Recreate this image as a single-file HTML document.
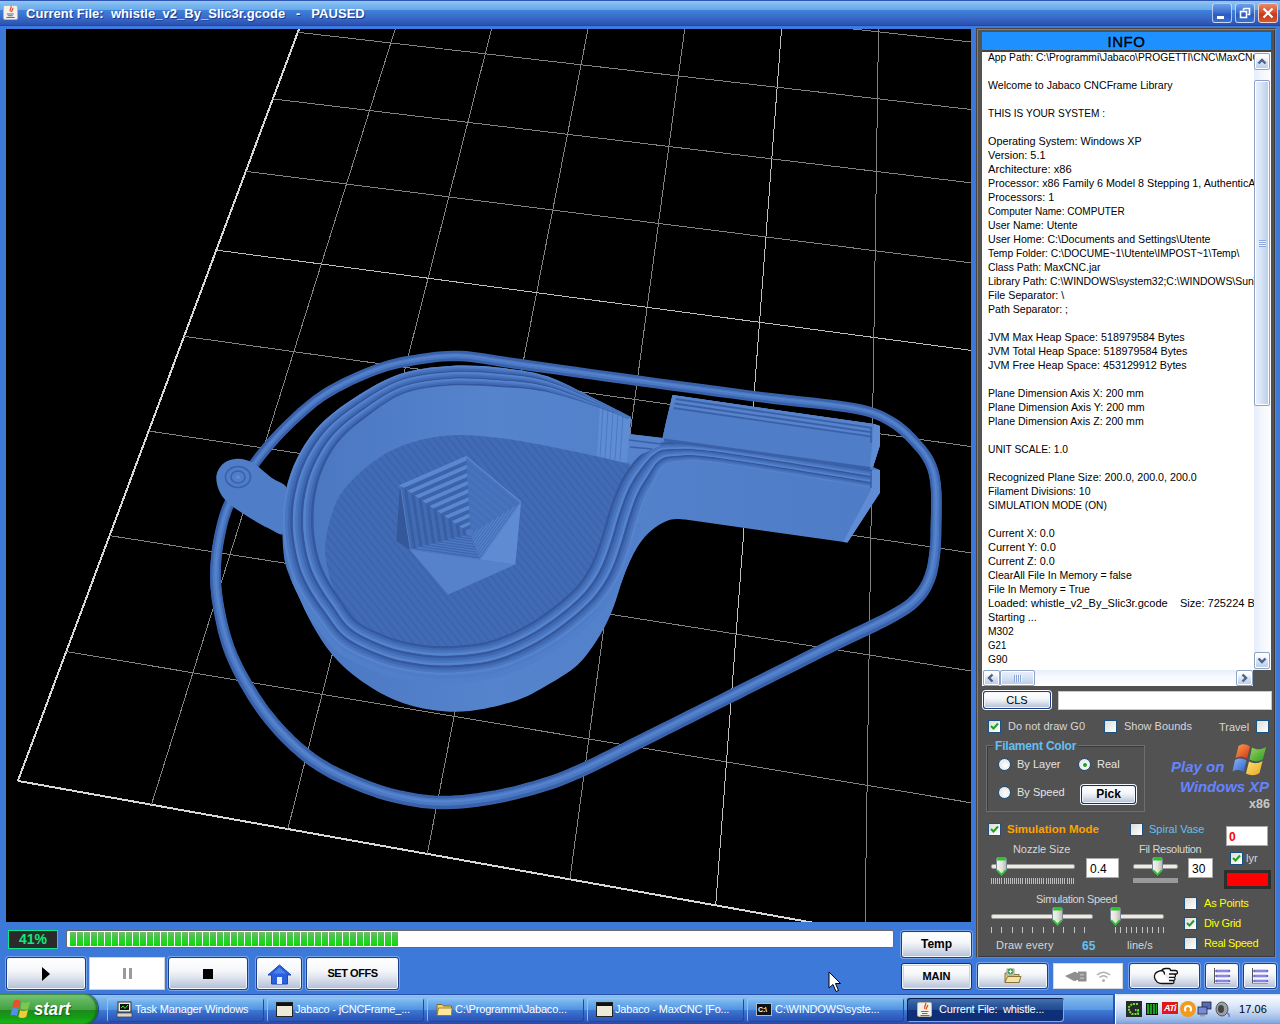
<!DOCTYPE html>
<html><head><meta charset="utf-8"><title>MaxCNC</title>
<style>
*{box-sizing:border-box;margin:0;padding:0}
html,body{width:1280px;height:1024px;overflow:hidden;background:#3d79d8;font-family:"Liberation Sans",sans-serif;font-size:11px;color:#000}
.abs{position:absolute}
#title{left:0;top:0;width:1280px;height:29px;background:linear-gradient(#2f55b5 0,#2f55b5 1px,#92c8f1 1px,#7ab6ee 5px,#68a9ec 10px,#3d82d8 10.5px,#3a70ce 16px,#315bba 22px,#2b50b0 25px,#27459c 25px,#27459c 26px,#3d7ae0 26px,#3d7ae0 29px)}
#title .t{left:26px;top:6px;font-weight:bold;font-size:13px;color:#fff;text-shadow:1px 1px 0 #1a3a90;white-space:pre;letter-spacing:0.03px}
.wb{top:3px;width:20px;height:20px;border:1px solid rgba(255,255,255,.62);border-radius:3px;background:linear-gradient(#6d9fe6,#3f72d2 45%,#2c5ac0 60%,#3a70d0)}
#view{left:6px;top:29px;width:965px;height:893px;background:#000;overflow:hidden}
#panel{left:976px;top:28px;width:300px;height:930px;background:#525252;border:1px solid;border-color:#4a443c #8a8278 #8a8278 #4a443c;box-shadow:inset 1px 1px 0 #808080,inset -1px -1px 0 #3a3a3a}
#info{left:982px;top:32px;width:289px;height:18px;background:#1e90ff;text-align:center;font-size:15px;line-height:20px;color:#000;letter-spacing:0.6px;-webkit-text-stroke:0.35px #000}
#ta{left:982px;top:52px;width:272px;height:618px;background:#fff;overflow:hidden}
.ln{height:14px;line-height:14px;font-size:11px;white-space:pre;color:#000}.ln span{display:inline-block;transform-origin:0 0}
.btn{border:1px solid #1c3f8c;border-radius:3px;background:linear-gradient(#ffffff 0,#f5f7fa 40%,#e2e7f0 60%,#c0cbde 88%,#aebbd3 100%);box-shadow:inset 0 0 0 1px #f4f6fa,0 0 0 1px rgba(170,200,245,.55);text-align:center;font-size:11px;color:#000}
.btn.b{font-weight:bold}
.sbb{width:16px;height:17px;border:1px solid #8ea2c6;border-radius:2px;background:linear-gradient(#fff 0,#f6f9fe 25%,#d0def3 60%,#b9cce8 100%);box-shadow:inset 0 0 0 1px #fff}
.sbb svg{position:absolute;left:-1px;top:-1px}
.sbt{border:1px solid #8ea2c6;border-radius:2px;background:linear-gradient(90deg,#eaf1fd,#d6e3f6 45%,#b9cce8);box-shadow:inset 0 0 0 1px #fff}
.sbt.h{background:linear-gradient(#eaf1fd,#d6e3f6 45%,#b9cce8)}
.tf{background:#fff;border:1px solid #7f9db9}
.lab{color:#d6d6d6;font-size:11px;white-space:pre;line-height:13px}
.cb{width:13px;height:13px;border:1px solid #1c5180;background:linear-gradient(135deg,#dcdcd7,#fff)}
.cb svg{position:absolute;left:1px;top:1px}
.rb{width:13px;height:13px;border:1px solid #1c5180;border-radius:50%;background:radial-gradient(circle at 60% 60%,#fff,#dcdcd7)}
.rb.on::after{content:"";position:absolute;left:3.5px;top:3.5px;width:4px;height:4px;border-radius:50%;background:#21a121}
.track{height:5px;background:#ecebe4;border:1px solid #9d9c99;border-radius:2px}
.thumb{width:11px;height:19px}
.tick{width:1px;background:#c8c8c8}
#taskbar{left:0;top:994px;width:1280px;height:30px;background:linear-gradient(#2a50b0 0,#2a50b0 1px,#8ec6f1 1px,#76b2ec 6px,#5a98e2 16px,#3d7ad4 16.5px,#3566c4 22px,#2c52b2 28px,#2a4aa8 30px)}
.tb{top:998px;height:24px;width:157px;border-radius:3px;background:linear-gradient(#8ac2f3 0,#6eaceb 5px,#5092e1 12px,#3b77d3 12.5px,#3262c2 18px,#2a51b2 24px);box-shadow:inset 1px 1px 0 rgba(150,195,245,.9),inset -1px -1px 0 #2446a0;color:#fff;font-size:11px;line-height:23px;white-space:pre;overflow:hidden;letter-spacing:-0.17px}
.tb span{position:absolute;left:28px;top:0}
.tb.act{background:linear-gradient(#4d74b2 0,#2f5b9d 6px,#1f4a90 12px,#0f3078 12.5px,#0e2e76 24px);box-shadow:inset 1px 1px 0 #0a1e50,inset -1px -1px 0 #8fa6d6}
</style></head><body>
<!-- title bar -->
<div id="title" class="abs">
 <div class="abs" style="left:3px;top:5px;width:15px;height:15px;background:#f4f0e8;border:1px solid #b9b6a8;border-radius:2px">
  <svg class="abs" style="left:0;top:-1px" width="13" height="15" viewBox="0 0 14 16"><path d="M7.5 1 C9 3 5 4.5 7 7 M9.5 3 C10.5 4.5 7.5 5.5 8.5 7.5" stroke="#e0491c" stroke-width="1.3" fill="none"/><path d="M3 9.5 H10.5 M4 11.5 H9.5 M2.5 13.5 H11.5" stroke="#5a6f9c" stroke-width="1.1" fill="none"/></svg>
 </div>
 <div class="abs t">Current File:  whistle_v2_By_Slic3r.gcode   -   PAUSED</div>
 <div class="abs wb" style="left:1212px"><div class="abs" style="left:4px;top:12px;width:7px;height:3px;background:#fff"></div></div>
 <div class="abs wb" style="left:1235px"><svg class="abs" style="left:0;top:0" width="18" height="18"><path d="M7.5 4.5 H13.5 V10.5 H11.5 M7.5 4.5 V6.5" stroke="#fff" stroke-width="1.6" fill="none"/><rect x="4.5" y="7.5" width="6" height="6" stroke="#fff" stroke-width="1.6" fill="none"/></svg></div>
 <div class="abs wb" style="left:1258px;border-color:#f0d0c8;background:linear-gradient(#e8896c,#d9502c 45%,#c23a16 60%,#d8562e)"><svg class="abs" style="left:0;top:0" width="18" height="18"><path d="M4.5 4.5 L13.5 13.5 M13.5 4.5 L4.5 13.5" stroke="#fff" stroke-width="2.2" fill="none"/></svg></div>
</div>

<!-- 3D view -->
<div id="view" class="abs">
<svg class="abs" style="left:0;top:0" width="965" height="893" viewBox="0 0 965 893">
<g shape-rendering="crispEdges"><line x1="11.9" y1="751.9" x2="336.1" y2="-115.3" stroke="#d8d8d8" stroke-width="2"/><line x1="11.9" y1="751.9" x2="1491.6" y2="1015.8" stroke="#d8d8d8" stroke-width="2"/><line x1="145.4" y1="775.7" x2="422.6" y2="-106.2" stroke="#828282" stroke-width="1"/><line x1="60.3" y1="622.6" x2="1455.4" y2="855.7" stroke="#828282" stroke-width="1"/><line x1="281.8" y1="800.1" x2="510.3" y2="-97.0" stroke="#828282" stroke-width="1"/><line x1="103.6" y1="506.6" x2="1423.4" y2="714.0" stroke="#828282" stroke-width="1"/><line x1="421.3" y1="824.9" x2="599.1" y2="-87.7" stroke="#828282" stroke-width="1"/><line x1="142.7" y1="402.0" x2="1394.9" y2="587.6" stroke="#828282" stroke-width="1"/><line x1="563.9" y1="850.3" x2="689.3" y2="-78.3" stroke="#828282" stroke-width="1"/><line x1="178.1" y1="307.3" x2="1369.2" y2="474.2" stroke="#828282" stroke-width="1"/><line x1="709.7" y1="876.4" x2="780.7" y2="-68.7" stroke="#bebebe" stroke-width="1"/><line x1="210.4" y1="221.1" x2="1346.1" y2="372.0" stroke="#bebebe" stroke-width="1"/><line x1="858.9" y1="903.0" x2="873.4" y2="-59.0" stroke="#828282" stroke-width="1"/><line x1="239.8" y1="142.3" x2="1325.2" y2="279.3" stroke="#828282" stroke-width="1"/><line x1="1011.5" y1="930.2" x2="967.4" y2="-49.1" stroke="#828282" stroke-width="1"/><line x1="266.9" y1="69.9" x2="1306.1" y2="194.8" stroke="#828282" stroke-width="1"/><line x1="1167.8" y1="958.0" x2="1062.8" y2="-39.1" stroke="#828282" stroke-width="1"/><line x1="291.8" y1="3.3" x2="1288.6" y2="117.6" stroke="#828282" stroke-width="1"/><line x1="1327.8" y1="986.6" x2="1159.6" y2="-29.0" stroke="#828282" stroke-width="1"/><line x1="314.8" y1="-58.3" x2="1272.6" y2="46.7" stroke="#828282" stroke-width="1"/><line x1="1491.6" y1="1015.8" x2="1257.8" y2="-18.7" stroke="#d8d8d8" stroke-width="2"/><line x1="336.1" y1="-115.3" x2="1257.8" y2="-18.7" stroke="#d8d8d8" stroke-width="2"/></g>
<defs><pattern id="hatch" width="6" height="6" patternUnits="userSpaceOnUse" patternTransform="rotate(-39)"><rect width="6" height="6" fill="#416bb5"/><rect width="2" height="6" fill="#3c65ae"/></pattern>
<linearGradient id="wallg" x1="0" y1="0" x2="1" y2="0"><stop offset="0" stop-color="#4a76c0"/><stop offset="0.35" stop-color="#5583cc"/><stop offset="1" stop-color="#4f7cc6"/></linearGradient>
</defs>
<g transform="translate(-6,-29)">
<path d="M459.8 360.1L465.5 360.4L470.8 360.9L476.1 361.6L481.7 362.5L488.0 363.5L495.4 364.7L504.0 366.1L514.4 367.6L526.7 369.3L540.9 371.3L556.4 373.5L572.9 375.8L589.9 378.2L607.0 380.6L623.7 382.9L639.6 385.1L655.0 387.2L670.6 389.4L686.1 391.5L701.6 393.5L716.8 395.6L731.6 397.5L746.0 399.4L759.8 401.2L773.4 402.8L786.8 404.4L800.0 405.8L812.7 407.1L824.7 408.4L835.8 409.8L845.9 411.2L854.7 412.7L862.0 414.2L868.0 415.7L872.8 417.2L876.8 418.7L880.3 420.3L883.6 422.0L886.9 423.9L890.5 426.1L894.1 428.3L897.4 430.8L900.6 433.5L903.7 436.3L906.6 439.2L909.3 442.1L912.0 445.0L914.4 447.7L916.7 450.3L918.7 452.6L920.5 454.9L922.1 457.2L923.5 459.4L924.8 461.7L926.1 464.1L927.2 466.6L928.2 469.2L929.0 471.7L929.7 474.2L930.3 476.9L930.8 479.7L931.2 482.7L931.6 486.0L931.9 489.6L932.1 493.6L932.2 498.1L932.3 503.0L932.2 508.0L932.1 513.1L932.0 518.0L931.9 522.6L931.8 526.8L931.7 530.5L931.7 533.8L931.7 536.8L931.6 539.7L931.5 542.5L931.3 545.2L931.1 548.0L930.8 551.0L930.4 554.2L930.0 557.4L929.5 560.7L929.0 564.0L928.4 567.2L927.7 570.4L926.8 573.4L925.9 576.3L924.8 579.0L923.7 581.7L922.4 584.3L921.1 586.8L919.6 589.2L918.0 591.5L916.1 593.8L914.0 596.2L911.8 598.4L909.7 600.4L907.5 602.3L905.1 604.2L902.2 606.1L898.9 608.3L894.8 610.7L889.8 613.5L884.0 616.6L877.3 620.0L869.9 623.6L861.9 627.4L853.6 631.3L844.9 635.4L836.2 639.6L827.5 643.8L818.7 648.2L809.4 652.8L799.9 657.6L790.2 662.4L780.5 667.3L770.9 672.1L761.6 676.7L752.6 681.2L744.0 685.5L735.6 689.7L727.3 693.8L719.2 697.9L711.2 701.9L703.3 705.8L695.5 709.7L687.7 713.6L679.9 717.5L672.1 721.4L664.4 725.2L656.8 729.1L649.3 732.8L641.9 736.5L634.7 740.0L627.8 743.5L621.0 746.9L614.3 750.2L607.8 753.5L601.5 756.6L595.4 759.7L589.4 762.6L583.6 765.3L578.0 767.8L572.7 770.1L567.6 772.3L562.9 774.2L558.3 776.0L553.6 777.7L548.9 779.3L543.9 780.9L538.6 782.6L532.9 784.3L526.9 785.9L520.8 787.6L514.5 789.2L508.1 790.7L501.8 792.0L495.5 793.3L489.2 794.4L483.0 795.4L476.8 796.3L470.5 797.1L464.3 797.8L458.1 798.3L452.0 798.7L446.0 798.8L440.2 798.8L434.5 798.6L428.8 798.2L423.3 797.5L417.7 796.8L412.3 795.8L406.9 794.8L401.5 793.7L396.3 792.5L391.1 791.2L386.0 789.8L381.0 788.2L376.1 786.6L371.2 784.8L366.4 783.0L361.6 781.1L357.0 779.2L352.4 777.3L347.9 775.3L343.4 773.3L339.1 771.2L334.8 769.1L330.7 766.9L326.6 764.5L322.7 762.1L318.8 759.6L315.1 757.1L311.5 754.5L308.0 751.7L304.6 748.9L301.2 746.0L297.7 742.9L294.3 739.7L290.9 736.3L287.4 732.8L284.0 729.2L280.6 725.5L277.2 721.6L274.0 717.7L270.8 713.8L267.7 709.8L264.7 705.7L261.8 701.4L258.9 697.1L256.1 692.7L253.4 688.3L250.8 683.9L248.3 679.5L246.0 675.3L243.8 671.2L241.7 667.2L239.8 663.3L238.0 659.4L236.3 655.6L234.7 651.6L233.1 647.6L231.7 643.4L230.3 639.0L228.9 634.4L227.7 629.7L226.5 625.0L225.4 620.2L224.4 615.5L223.5 610.9L222.7 606.4L222.0 602.2L221.4 598.1L220.9 594.2L220.5 590.3L220.1 586.4L219.9 582.6L219.7 578.6L219.7 574.6L219.8 570.4L219.9 566.2L220.2 561.9L220.5 557.7L221.0 553.3L221.6 549.0L222.3 544.6L223.1 540.2L224.0 535.7L224.9 531.3L225.9 526.8L227.1 522.3L228.4 517.8L229.9 513.3L231.7 508.7L233.7 504.0L236.1 499.3L238.9 494.3L241.9 489.3L245.1 484.2L248.6 479.1L252.1 474.0L255.7 469.0L259.3 464.2L262.9 459.4L266.6 454.7L270.4 450.1L274.3 445.5L278.3 441.0L282.4 436.6L286.6 432.3L290.9 428.0L295.2 423.8L299.6 419.7L304.1 415.6L308.6 411.6L313.2 407.8L318.0 404.0L323.0 400.4L328.2 397.0L333.7 393.7L339.6 390.4L345.8 387.2L352.1 384.1L358.4 381.2L364.7 378.5L370.7 376.1L376.4 373.8L381.7 371.9L386.7 370.3L391.5 369.0L396.2 367.8L400.8 366.7L405.6 365.8L410.5 364.9L415.6 364.0L420.9 363.2L426.2 362.4L431.5 361.6L436.9 361.0L442.4 360.5L448.0 360.1L453.8 360.0ZM453.9 353.8L447.8 354.0L441.9 354.3L436.2 354.8L430.6 355.5L425.1 356.3L419.7 357.1L414.4 358.0L409.2 358.8L404.2 359.7L399.2 360.7L394.3 361.8L389.4 363.0L384.4 364.5L379.1 366.2L373.6 368.2L367.7 370.4L361.6 373.0L355.2 375.7L348.7 378.7L342.2 381.8L335.8 385.1L329.6 388.5L323.8 392.0L318.4 395.6L313.1 399.4L308.1 403.3L303.3 407.3L298.6 411.3L294.0 415.5L289.6 419.7L285.1 424.0L280.8 428.3L276.5 432.7L272.3 437.3L268.2 441.8L264.2 446.5L260.2 451.2L256.4 456.0L252.7 460.8L249.0 465.8L245.4 470.8L241.7 476.0L238.2 481.3L234.9 486.5L231.7 491.7L228.8 496.9L226.3 502.0L224.0 506.9L222.1 511.8L220.5 516.6L219.1 521.4L217.9 526.1L216.8 530.7L215.8 535.2L214.9 539.8L214.1 544.3L213.3 548.9L212.7 553.4L212.2 557.9L211.8 562.3L211.5 566.8L211.4 571.1L211.3 575.4L211.3 579.7L211.4 583.8L211.6 587.9L212.0 591.9L212.4 595.9L212.9 600.0L213.6 604.2L214.3 608.6L215.1 613.1L216.0 617.8L217.0 622.6L218.1 627.5L219.2 632.4L220.5 637.3L221.9 642.0L223.3 646.6L224.8 651.0L226.4 655.2L228.1 659.3L229.9 663.4L231.7 667.4L233.7 671.4L235.8 675.5L238.0 679.7L240.4 684.1L242.9 688.5L245.6 693.0L248.3 697.6L251.2 702.1L254.2 706.6L257.2 711.0L260.3 715.3L263.4 719.4L266.7 723.5L270.1 727.6L273.5 731.5L277.0 735.4L280.6 739.2L284.1 742.8L287.7 746.3L291.2 749.6L294.8 752.8L298.3 755.9L302.0 758.9L305.6 761.8L309.4 764.5L313.3 767.2L317.3 769.9L321.5 772.4L325.8 774.9L330.1 777.2L334.5 779.5L339.1 781.6L343.7 783.7L348.3 785.8L353.0 787.8L357.8 789.7L362.7 791.6L367.6 793.5L372.7 795.3L377.8 797.1L383.0 798.7L388.4 800.2L393.7 801.5L399.2 802.8L404.7 804.0L410.3 805.0L416.0 806.0L421.8 806.8L427.7 807.5L433.7 807.9L439.8 808.2L446.0 808.2L452.3 808.0L458.7 807.6L465.1 807.1L471.5 806.4L478.0 805.6L484.4 804.6L490.8 803.6L497.2 802.5L503.7 801.2L510.2 799.7L516.8 798.2L523.2 796.5L529.5 794.9L535.6 793.2L541.4 791.4L546.9 789.7L552.0 788.1L556.9 786.4L561.7 784.6L566.5 782.7L571.4 780.7L576.5 778.6L582.0 776.2L587.8 773.6L593.7 770.8L599.8 767.8L606.0 764.7L612.3 761.6L618.8 758.3L625.4 754.9L632.2 751.5L639.2 748.0L646.4 744.4L653.8 740.7L661.4 737.0L669.0 733.1L676.7 729.2L684.5 725.3L692.3 721.4L700.2 717.5L708.0 713.6L715.9 709.6L723.9 705.6L732.0 701.5L740.3 697.4L748.8 693.1L757.4 688.8L766.4 684.3L775.8 679.6L785.4 674.8L795.1 669.9L804.8 665.0L814.4 660.2L823.6 655.6L832.5 651.2L841.1 647.0L849.8 642.8L858.5 638.7L866.8 634.7L874.9 630.9L882.3 627.2L889.2 623.7L895.2 620.5L900.3 617.6L904.5 615.1L908.1 612.8L911.2 610.7L913.9 608.6L916.3 606.4L918.7 604.2L921.0 601.8L923.3 599.3L925.4 596.6L927.3 594.0L928.9 591.2L930.4 588.5L931.7 585.6L933.0 582.8L934.1 579.8L935.2 576.6L936.1 573.3L936.8 569.9L937.5 566.4L938.0 563.0L938.4 559.6L938.9 556.3L939.2 553.0L939.6 549.9L939.8 547.0L939.9 544.1L940.0 541.2L940.1 538.3L940.1 535.2L940.2 531.9L940.2 528.2L940.3 524.1L940.4 519.5L940.5 514.5L940.5 509.4L940.6 504.3L940.5 499.3L940.4 494.6L940.1 490.4L939.8 486.7L939.4 483.2L938.9 480.0L938.4 476.9L937.7 474.0L936.9 471.1L936.0 468.3L934.8 465.4L933.5 462.5L932.1 459.8L930.6 457.2L928.9 454.6L927.1 452.1L925.1 449.5L922.9 446.9L920.6 444.3L918.1 441.5L915.4 438.6L912.4 435.5L909.3 432.4L906.0 429.3L902.4 426.3L898.5 423.5L894.5 420.9L890.7 418.7L887.1 416.7L883.5 414.7L879.4 412.9L874.8 411.2L869.4 409.5L863.0 407.9L855.3 406.3L846.2 404.8L835.9 403.3L824.7 402.0L812.7 400.7L800.0 399.3L786.9 397.9L773.6 396.4L760.2 394.8L746.4 393.0L732.1 391.2L717.3 389.2L702.2 387.2L686.8 385.2L671.3 383.1L655.8 381.0L640.4 378.9L624.6 376.7L607.9 374.4L590.9 372.0L574.0 369.6L557.5 367.3L542.0 365.1L527.9 363.1L515.6 361.4L505.4 359.9L496.8 358.6L489.6 357.4L483.3 356.4L477.5 355.5L472.0 354.8L466.3 354.2L460.2 353.9Z" fill="#3a62ab" fill-rule="evenodd" stroke="#3a62ab" stroke-width="2.2"/>
<path d="M459.8 358.1L465.5 358.4L470.8 358.9L476.1 359.6L481.7 360.5L488.0 361.5L495.4 362.7L504.0 364.1L514.4 365.6L526.7 367.3L540.9 369.3L556.4 371.5L572.9 373.8L589.9 376.2L607.0 378.6L623.7 380.9L639.6 383.1L655.0 385.2L670.6 387.4L686.1 389.5L701.6 391.5L716.8 393.6L731.6 395.5L746.0 397.4L759.8 399.2L773.4 400.8L786.8 402.4L800.0 403.8L812.7 405.1L824.7 406.4L835.8 407.8L845.9 409.2L854.7 410.7L862.0 412.2L868.0 413.7L872.8 415.2L876.8 416.7L880.3 418.3L883.6 420.0L886.9 421.9L890.5 424.1L894.1 426.3L897.4 428.8L900.6 431.5L903.7 434.3L906.6 437.2L909.3 440.1L912.0 443.0L914.4 445.7L916.7 448.3L918.7 450.6L920.5 452.9L922.1 455.2L923.5 457.4L924.8 459.7L926.1 462.1L927.2 464.6L928.2 467.2L929.0 469.7L929.7 472.2L930.3 474.9L930.8 477.7L931.2 480.7L931.6 484.0L931.9 487.6L932.1 491.6L932.2 496.1L932.3 501.0L932.2 506.0L932.1 511.1L932.0 516.0L931.9 520.6L931.8 524.8L931.7 528.5L931.7 531.8L931.7 534.8L931.6 537.7L931.5 540.5L931.3 543.2L931.1 546.0L930.8 549.0L930.4 552.2L930.0 555.4L929.5 558.7L929.0 562.0L928.4 565.2L927.7 568.4L926.8 571.4L925.9 574.3L924.8 577.0L923.7 579.7L922.4 582.3L921.1 584.8L919.6 587.2L918.0 589.5L916.1 591.8L914.0 594.2L911.8 596.4L909.7 598.4L907.5 600.3L905.1 602.2L902.2 604.1L898.9 606.3L894.8 608.7L889.8 611.5L884.0 614.6L877.3 618.0L869.9 621.6L861.9 625.4L853.6 629.3L844.9 633.4L836.2 637.6L827.5 641.8L818.7 646.2L809.4 650.8L799.9 655.6L790.2 660.4L780.5 665.3L770.9 670.1L761.6 674.7L752.6 679.2L744.0 683.5L735.6 687.7L727.3 691.8L719.2 695.9L711.2 699.9L703.3 703.8L695.5 707.7L687.7 711.6L679.9 715.5L672.1 719.4L664.4 723.2L656.8 727.1L649.3 730.8L641.9 734.5L634.7 738.0L627.8 741.5L621.0 744.9L614.3 748.2L607.8 751.5L601.5 754.6L595.4 757.7L589.4 760.6L583.6 763.3L578.0 765.8L572.7 768.1L567.6 770.3L562.9 772.2L558.3 774.0L553.6 775.7L548.9 777.3L543.9 778.9L538.6 780.6L532.9 782.3L526.9 783.9L520.8 785.6L514.5 787.2L508.1 788.7L501.8 790.0L495.5 791.3L489.2 792.4L483.0 793.4L476.8 794.3L470.5 795.1L464.3 795.8L458.1 796.3L452.0 796.7L446.0 796.8L440.2 796.8L434.5 796.6L428.8 796.2L423.3 795.5L417.7 794.8L412.3 793.8L406.9 792.8L401.5 791.7L396.3 790.5L391.1 789.2L386.0 787.8L381.0 786.2L376.1 784.6L371.2 782.8L366.4 781.0L361.6 779.1L357.0 777.2L352.4 775.3L347.9 773.3L343.4 771.3L339.1 769.2L334.8 767.1L330.7 764.9L326.6 762.5L322.7 760.1L318.8 757.6L315.1 755.1L311.5 752.5L308.0 749.7L304.6 746.9L301.2 744.0L297.7 740.9L294.3 737.7L290.9 734.3L287.4 730.8L284.0 727.2L280.6 723.5L277.2 719.6L274.0 715.7L270.8 711.8L267.7 707.8L264.7 703.7L261.8 699.4L258.9 695.1L256.1 690.7L253.4 686.3L250.8 681.9L248.3 677.5L246.0 673.3L243.8 669.2L241.7 665.2L239.8 661.3L238.0 657.4L236.3 653.6L234.7 649.6L233.1 645.6L231.7 641.4L230.3 637.0L228.9 632.4L227.7 627.7L226.5 623.0L225.4 618.2L224.4 613.5L223.5 608.9L222.7 604.4L222.0 600.2L221.4 596.1L220.9 592.2L220.5 588.3L220.1 584.4L219.9 580.6L219.7 576.6L219.7 572.6L219.8 568.4L219.9 564.2L220.2 559.9L220.5 555.7L221.0 551.3L221.6 547.0L222.3 542.6L223.1 538.2L224.0 533.7L224.9 529.3L225.9 524.8L227.1 520.3L228.4 515.8L229.9 511.3L231.7 506.7L233.7 502.0L236.1 497.3L238.9 492.3L241.9 487.3L245.1 482.2L248.6 477.1L252.1 472.0L255.7 467.0L259.3 462.2L262.9 457.4L266.6 452.7L270.4 448.1L274.3 443.5L278.3 439.0L282.4 434.6L286.6 430.3L290.9 426.0L295.2 421.8L299.6 417.7L304.1 413.6L308.6 409.6L313.2 405.8L318.0 402.0L323.0 398.4L328.2 395.0L333.7 391.7L339.6 388.4L345.8 385.2L352.1 382.1L358.4 379.2L364.7 376.5L370.7 374.1L376.4 371.8L381.7 369.9L386.7 368.3L391.5 367.0L396.2 365.8L400.8 364.7L405.6 363.8L410.5 362.9L415.6 362.0L420.9 361.2L426.2 360.4L431.5 359.6L436.9 359.0L442.4 358.5L448.0 358.1L453.8 358.0ZM453.9 351.8L447.8 352.0L441.9 352.3L436.2 352.8L430.6 353.5L425.1 354.3L419.7 355.1L414.4 356.0L409.2 356.8L404.2 357.7L399.2 358.7L394.3 359.8L389.4 361.0L384.4 362.5L379.1 364.2L373.6 366.2L367.7 368.4L361.6 371.0L355.2 373.7L348.7 376.7L342.2 379.8L335.8 383.1L329.6 386.5L323.8 390.0L318.4 393.6L313.1 397.4L308.1 401.3L303.3 405.3L298.6 409.3L294.0 413.5L289.6 417.7L285.1 422.0L280.8 426.3L276.5 430.7L272.3 435.3L268.2 439.8L264.2 444.5L260.2 449.2L256.4 454.0L252.7 458.8L249.0 463.8L245.4 468.8L241.7 474.0L238.2 479.3L234.9 484.5L231.7 489.7L228.8 494.9L226.3 500.0L224.0 504.9L222.1 509.8L220.5 514.6L219.1 519.4L217.9 524.1L216.8 528.7L215.8 533.2L214.9 537.8L214.1 542.3L213.3 546.9L212.7 551.4L212.2 555.9L211.8 560.3L211.5 564.8L211.4 569.1L211.3 573.4L211.3 577.7L211.4 581.8L211.6 585.9L212.0 589.9L212.4 593.9L212.9 598.0L213.6 602.2L214.3 606.6L215.1 611.1L216.0 615.8L217.0 620.6L218.1 625.5L219.2 630.4L220.5 635.3L221.9 640.0L223.3 644.6L224.8 649.0L226.4 653.2L228.1 657.3L229.9 661.4L231.7 665.4L233.7 669.4L235.8 673.5L238.0 677.7L240.4 682.1L242.9 686.5L245.6 691.0L248.3 695.6L251.2 700.1L254.2 704.6L257.2 709.0L260.3 713.3L263.4 717.4L266.7 721.5L270.1 725.6L273.5 729.5L277.0 733.4L280.6 737.2L284.1 740.8L287.7 744.3L291.2 747.6L294.8 750.8L298.3 753.9L302.0 756.9L305.6 759.8L309.4 762.5L313.3 765.2L317.3 767.9L321.5 770.4L325.8 772.9L330.1 775.2L334.5 777.5L339.1 779.6L343.7 781.7L348.3 783.8L353.0 785.8L357.8 787.7L362.7 789.6L367.6 791.5L372.7 793.3L377.8 795.1L383.0 796.7L388.4 798.2L393.7 799.5L399.2 800.8L404.7 802.0L410.3 803.0L416.0 804.0L421.8 804.8L427.7 805.5L433.7 805.9L439.8 806.2L446.0 806.2L452.3 806.0L458.7 805.6L465.1 805.1L471.5 804.4L478.0 803.6L484.4 802.6L490.8 801.6L497.2 800.5L503.7 799.2L510.2 797.7L516.8 796.2L523.2 794.5L529.5 792.9L535.6 791.2L541.4 789.4L546.9 787.7L552.0 786.1L556.9 784.4L561.7 782.6L566.5 780.7L571.4 778.7L576.5 776.6L582.0 774.2L587.8 771.6L593.7 768.8L599.8 765.8L606.0 762.7L612.3 759.6L618.8 756.3L625.4 752.9L632.2 749.5L639.2 746.0L646.4 742.4L653.8 738.7L661.4 735.0L669.0 731.1L676.7 727.2L684.5 723.3L692.3 719.4L700.2 715.5L708.0 711.6L715.9 707.6L723.9 703.6L732.0 699.5L740.3 695.4L748.8 691.1L757.4 686.8L766.4 682.3L775.8 677.6L785.4 672.8L795.1 667.9L804.8 663.0L814.4 658.2L823.6 653.6L832.5 649.2L841.1 645.0L849.8 640.8L858.5 636.7L866.8 632.7L874.9 628.9L882.3 625.2L889.2 621.7L895.2 618.5L900.3 615.6L904.5 613.1L908.1 610.8L911.2 608.7L913.9 606.6L916.3 604.4L918.7 602.2L921.0 599.8L923.3 597.3L925.4 594.6L927.3 592.0L928.9 589.2L930.4 586.5L931.7 583.6L933.0 580.8L934.1 577.8L935.2 574.6L936.1 571.3L936.8 567.9L937.5 564.4L938.0 561.0L938.4 557.6L938.9 554.3L939.2 551.0L939.6 547.9L939.8 545.0L939.9 542.1L940.0 539.2L940.1 536.3L940.1 533.2L940.2 529.9L940.2 526.2L940.3 522.1L940.4 517.5L940.5 512.5L940.5 507.4L940.6 502.3L940.5 497.3L940.4 492.6L940.1 488.4L939.8 484.7L939.4 481.2L938.9 478.0L938.4 474.9L937.7 472.0L936.9 469.1L936.0 466.3L934.8 463.4L933.5 460.5L932.1 457.8L930.6 455.2L928.9 452.6L927.1 450.1L925.1 447.5L922.9 444.9L920.6 442.3L918.1 439.5L915.4 436.6L912.4 433.5L909.3 430.4L906.0 427.3L902.4 424.3L898.5 421.5L894.5 418.9L890.7 416.7L887.1 414.7L883.5 412.7L879.4 410.9L874.8 409.2L869.4 407.5L863.0 405.9L855.3 404.3L846.2 402.8L835.9 401.3L824.7 400.0L812.7 398.7L800.0 397.3L786.9 395.9L773.6 394.4L760.2 392.8L746.4 391.0L732.1 389.2L717.3 387.2L702.2 385.2L686.8 383.2L671.3 381.1L655.8 379.0L640.4 376.9L624.6 374.7L607.9 372.4L590.9 370.0L574.0 367.6L557.5 365.3L542.0 363.1L527.9 361.1L515.6 359.4L505.4 357.9L496.8 356.6L489.6 355.4L483.3 354.4L477.5 353.5L472.0 352.8L466.3 352.2L460.2 351.9Z" fill="#3a62ab" fill-rule="evenodd" stroke="#3a62ab" stroke-width="2.2"/>
<path d="M459.9 357.9L465.7 358.2L471.0 358.7L476.4 359.4L482.0 360.2L488.3 361.3L495.6 362.5L504.3 363.8L514.6 365.4L526.9 367.1L541.1 369.1L556.6 371.3L573.1 373.6L590.1 376.0L607.1 378.4L623.8 380.7L639.7 382.9L655.2 385.0L670.7 387.1L686.2 389.2L701.7 391.3L716.9 393.3L731.7 395.3L746.1 397.2L759.9 398.9L773.4 400.6L786.8 402.1L800.0 403.5L812.7 404.8L824.7 406.2L835.8 407.5L845.9 408.9L854.8 410.4L862.2 412.0L868.2 413.5L873.2 415.0L877.3 416.6L880.8 418.2L884.2 419.9L887.5 421.9L891.2 424.0L894.8 426.3L898.2 428.9L901.5 431.6L904.6 434.5L907.6 437.4L910.3 440.3L913.0 443.2L915.5 445.9L917.7 448.5L919.7 450.9L921.6 453.3L923.2 455.6L924.7 457.9L926.1 460.2L927.3 462.6L928.5 465.2L929.5 467.8L930.3 470.4L931.0 473.0L931.6 475.7L932.2 478.5L932.6 481.6L932.9 484.9L933.3 488.5L933.5 492.6L933.6 497.1L933.6 502.0L933.6 507.1L933.5 512.1L933.4 517.0L933.3 521.7L933.2 525.8L933.1 529.5L933.1 532.8L933.1 535.9L933.0 538.8L932.9 541.5L932.7 544.3L932.5 547.1L932.2 550.1L931.8 553.3L931.4 556.6L930.9 559.9L930.4 563.2L929.8 566.5L929.1 569.7L928.2 572.7L927.3 575.6L926.2 578.4L925.0 581.2L923.8 583.8L922.4 586.3L920.9 588.8L919.2 591.2L917.3 593.5L915.2 595.9L913.0 598.2L910.8 600.2L908.6 602.1L906.1 604.0L903.2 606.0L899.8 608.2L895.7 610.7L890.7 613.5L884.8 616.6L878.1 620.0L870.7 623.6L862.7 627.4L854.4 631.4L845.8 635.4L837.0 639.6L828.4 643.8L819.5 648.2L810.3 652.8L800.7 657.6L791.0 662.4L781.3 667.3L771.7 672.1L762.4 676.8L753.4 681.3L744.8 685.6L736.3 689.8L728.1 693.9L720.0 698.0L712.0 701.9L704.1 705.9L696.3 709.8L688.5 713.7L680.7 717.6L672.9 721.5L665.2 725.3L657.5 729.2L650.0 732.9L642.7 736.6L635.5 740.2L628.5 743.6L621.7 747.0L615.1 750.4L608.6 753.6L602.3 756.8L596.1 759.8L590.1 762.7L584.3 765.5L578.7 768.0L573.3 770.3L568.3 772.5L563.5 774.4L558.8 776.2L554.2 777.9L549.4 779.6L544.4 781.2L539.1 782.9L533.3 784.5L527.4 786.2L521.2 787.9L514.9 789.5L508.5 791.0L502.1 792.4L495.7 793.6L489.5 794.7L483.3 795.7L477.0 796.6L470.7 797.4L464.4 798.1L458.2 798.6L452.1 799.0L446.0 799.2L440.1 799.2L434.4 799.0L428.7 798.5L423.0 797.9L417.4 797.1L411.9 796.2L406.5 795.1L401.1 794.0L395.8 792.8L390.6 791.5L385.5 790.0L380.5 788.5L375.5 786.8L370.6 785.1L365.8 783.2L361.0 781.4L356.3 779.5L351.7 777.5L347.2 775.5L342.7 773.5L338.3 771.4L334.0 769.2L329.8 767.0L325.8 764.7L321.8 762.2L317.9 759.7L314.2 757.1L310.6 754.5L307.0 751.7L303.5 748.9L300.1 745.9L296.7 742.8L293.2 739.6L289.7 736.2L286.3 732.7L282.8 729.0L279.4 725.3L276.1 721.4L272.8 717.5L269.6 713.5L266.5 709.5L263.5 705.3L260.5 701.1L257.6 696.7L254.8 692.3L252.1 687.8L249.5 683.4L247.0 679.1L244.6 674.8L242.5 670.7L240.4 666.7L238.5 662.8L236.6 658.9L234.9 655.0L233.3 651.0L231.8 647.0L230.3 642.7L228.9 638.3L227.5 633.7L226.3 629.0L225.1 624.2L224.0 619.4L223.0 614.7L222.1 610.0L221.3 605.6L220.6 601.3L220.0 597.3L219.5 593.3L219.0 589.4L218.7 585.5L218.5 581.6L218.3 577.6L218.3 573.5L218.4 569.3L218.5 565.1L218.8 560.8L219.2 556.5L219.6 552.2L220.2 547.8L220.9 543.4L221.7 538.9L222.6 534.5L223.6 530.0L224.6 525.5L225.8 521.0L227.1 516.4L228.6 511.8L230.4 507.2L232.5 502.5L234.9 497.7L237.7 492.7L240.7 487.6L244.0 482.5L247.4 477.4L251.0 472.3L254.6 467.3L258.2 462.4L261.8 457.6L265.6 452.9L269.4 448.3L273.3 443.7L277.3 439.2L281.4 434.8L285.6 430.4L289.9 426.2L294.3 421.9L298.7 417.8L303.1 413.7L307.7 409.7L312.4 405.8L317.2 402.1L322.2 398.4L327.5 395.0L333.0 391.6L339.0 388.3L345.2 385.1L351.5 382.0L357.9 379.1L364.2 376.4L370.2 373.9L375.9 371.7L381.3 369.8L386.3 368.2L391.1 366.8L395.9 365.6L400.6 364.5L405.3 363.6L410.3 362.7L415.4 361.8L420.7 361.0L426.0 360.1L431.4 359.4L436.8 358.8L442.3 358.3L448.0 357.9L453.8 357.8ZM453.9 353.8L447.9 354.0L442.0 354.3L436.3 354.8L430.8 355.5L425.3 356.3L420.0 357.1L414.6 358.0L409.4 358.8L404.4 359.7L399.6 360.7L394.7 361.8L389.8 363.0L384.8 364.4L379.6 366.1L374.1 368.1L368.3 370.3L362.2 372.8L355.8 375.6L349.3 378.6L342.9 381.7L336.5 384.9L330.4 388.3L324.7 391.8L319.3 395.4L314.1 399.1L309.1 402.9L304.3 406.9L299.7 411.0L295.1 415.1L290.7 419.3L286.3 423.6L281.9 427.9L277.6 432.3L273.5 436.8L269.4 441.4L265.4 446.0L261.5 450.7L257.7 455.5L254.0 460.3L250.3 465.2L246.7 470.3L243.1 475.4L239.6 480.6L236.3 485.8L233.1 491.0L230.3 496.2L227.7 501.2L225.5 506.1L223.7 510.9L222.1 515.7L220.7 520.4L219.5 525.0L218.4 529.6L217.4 534.1L216.5 538.7L215.7 543.2L214.9 547.7L214.3 552.2L213.8 556.7L213.5 561.1L213.2 565.4L213.0 569.8L212.9 574.1L213.0 578.3L213.1 582.4L213.3 586.4L213.7 590.4L214.1 594.4L214.6 598.5L215.2 602.6L215.9 606.9L216.7 611.5L217.6 616.1L218.6 621.0L219.7 625.8L220.9 630.7L222.2 635.5L223.5 640.2L225.0 644.8L226.5 649.1L228.1 653.3L229.7 657.4L231.5 661.4L233.3 665.4L235.3 669.4L237.4 673.5L239.6 677.6L242.0 682.0L244.5 686.4L247.1 690.9L249.9 695.4L252.7 699.9L255.7 704.4L258.7 708.7L261.7 713.0L264.9 717.1L268.2 721.2L271.5 725.2L274.9 729.1L278.4 733.0L281.9 736.7L285.5 740.3L289.0 743.8L292.5 747.1L296.0 750.3L299.6 753.3L303.2 756.3L306.8 759.1L310.5 761.9L314.4 764.5L318.4 767.2L322.5 769.7L326.7 772.1L331.0 774.4L335.4 776.6L339.9 778.8L344.5 780.9L349.1 782.9L353.8 784.9L358.6 786.8L363.4 788.7L368.3 790.6L373.3 792.4L378.4 794.1L383.6 795.7L388.9 797.2L394.2 798.5L399.6 799.8L405.1 801.0L410.7 802.0L416.4 803.0L422.1 803.8L427.9 804.4L433.9 804.9L439.9 805.1L446.0 805.2L452.2 805.0L458.5 804.6L464.9 804.0L471.3 803.3L477.7 802.5L484.1 801.6L490.5 800.6L496.8 799.5L503.3 798.2L509.8 796.7L516.3 795.2L522.7 793.6L529.0 791.9L535.0 790.2L540.9 788.5L546.3 786.8L551.4 785.1L556.3 783.4L561.1 781.7L565.8 779.8L570.7 777.9L575.8 775.7L581.2 773.3L587.0 770.7L592.9 768.0L598.9 765.0L605.1 761.9L611.4 758.8L617.9 755.5L624.6 752.1L631.4 748.7L638.4 745.3L645.6 741.7L652.9 738.0L660.5 734.2L668.1 730.4L675.8 726.5L683.6 722.6L691.4 718.7L699.2 714.8L707.1 710.8L715.0 706.9L723.0 702.9L731.1 698.8L739.4 694.7L747.8 690.4L756.5 686.1L765.4 681.6L774.8 676.9L784.4 672.1L794.1 667.2L803.8 662.3L813.4 657.5L822.7 652.9L831.5 648.5L840.2 644.3L848.9 640.1L857.5 636.0L865.9 632.0L873.9 628.2L881.3 624.6L888.1 621.1L894.1 617.9L899.2 615.1L903.4 612.6L907.0 610.3L910.0 608.2L912.6 606.1L915.0 604.0L917.3 601.9L919.6 599.5L921.9 597.0L923.9 594.4L925.8 591.8L927.4 589.2L928.8 586.4L930.1 583.7L931.4 580.8L932.5 577.9L933.5 574.7L934.4 571.5L935.2 568.1L935.8 564.8L936.3 561.4L936.8 558.0L937.2 554.7L937.6 551.4L937.9 548.3L938.1 545.4L938.3 542.6L938.4 539.7L938.4 536.8L938.5 533.7L938.5 530.4L938.5 526.7L938.6 522.6L938.7 518.0L938.8 513.0L938.9 507.9L938.9 502.8L938.9 497.9L938.8 493.2L938.5 489.1L938.2 485.3L937.8 481.9L937.3 478.7L936.8 475.7L936.1 472.8L935.4 470.0L934.4 467.2L933.3 464.4L932.1 461.7L930.7 459.0L929.2 456.4L927.6 453.9L925.8 451.4L923.8 448.9L921.7 446.4L919.4 443.8L916.9 441.0L914.2 438.1L911.3 435.0L908.2 432.0L904.9 429.0L901.4 426.0L897.6 423.3L893.7 420.7L890.0 418.5L886.4 416.5L882.8 414.6L878.9 412.9L874.4 411.2L869.1 409.5L862.8 408.0L855.2 406.4L846.1 404.8L835.9 403.4L824.7 402.0L812.7 400.7L800.0 399.4L786.9 398.0L773.5 396.5L760.1 394.9L746.4 393.1L732.0 391.2L717.2 389.3L702.1 387.3L686.7 385.2L671.2 383.1L655.6 381.0L640.2 378.9L624.4 376.7L607.7 374.4L590.7 372.0L573.8 369.6L557.3 367.3L541.8 365.1L527.7 363.2L515.4 361.4L505.1 360.0L496.5 358.6L489.3 357.4L483.0 356.4L477.2 355.5L471.7 354.8L466.2 354.3L460.1 353.9Z" fill="#4b78c3" fill-rule="evenodd" stroke="#4b78c3" stroke-width="1"/>
<path d="M459.9 356.1L465.8 356.5L471.2 357.0L476.6 357.7L482.3 358.5L488.6 359.6L495.9 360.8L504.5 362.1L514.8 363.6L527.1 365.4L541.3 367.3L556.8 369.5L573.3 371.9L590.3 374.3L607.3 376.6L624.0 379.0L639.9 381.2L655.3 383.3L670.8 385.4L686.4 387.5L701.8 389.5L717.0 391.6L731.8 393.5L746.2 395.4L759.9 397.2L773.4 398.8L786.8 400.3L800.0 401.7L812.7 403.1L824.7 404.4L835.9 405.7L846.0 407.1L854.9 408.7L862.4 410.2L868.5 411.8L873.5 413.3L877.7 414.9L881.4 416.6L884.8 418.4L888.2 420.3L891.9 422.5L895.6 424.9L899.1 427.5L902.5 430.3L905.6 433.2L908.6 436.1L911.4 439.1L914.1 442.0L916.6 444.7L918.8 447.3L920.9 449.8L922.8 452.1L924.5 454.5L926.0 456.9L927.4 459.3L928.7 461.8L929.8 464.4L930.9 467.1L931.8 469.7L932.5 472.3L933.1 475.1L933.6 478.0L934.1 481.1L934.4 484.4L934.8 488.1L935.0 492.2L935.1 496.8L935.2 501.6L935.1 506.7L935.0 511.8L934.9 516.7L934.8 521.3L934.7 525.5L934.7 529.2L934.6 532.5L934.6 535.6L934.5 538.4L934.4 541.2L934.3 544.0L934.0 546.9L933.7 549.9L933.3 553.1L932.9 556.4L932.5 559.7L931.9 563.0L931.3 566.4L930.6 569.6L929.7 572.7L928.8 575.7L927.6 578.5L926.5 581.3L925.2 583.9L923.8 586.5L922.3 589.0L920.6 591.5L918.6 593.9L916.4 596.3L914.2 598.6L912.0 600.7L909.7 602.7L907.2 604.6L904.3 606.7L900.8 608.9L896.7 611.3L891.7 614.1L885.8 617.3L879.0 620.7L871.6 624.3L863.6 628.1L855.3 632.1L846.6 636.2L837.9 640.4L829.3 644.6L820.4 649.0L811.1 653.6L801.6 658.3L791.9 663.2L782.2 668.1L772.6 672.9L763.3 677.6L754.3 682.1L745.6 686.4L737.2 690.6L729.0 694.7L720.8 698.8L712.9 702.7L705.0 706.7L697.1 710.6L689.3 714.5L681.5 718.4L673.7 722.3L666.0 726.2L658.4 730.0L650.9 733.8L643.5 737.4L636.3 741.0L629.3 744.5L622.5 747.9L615.9 751.2L609.4 754.5L603.1 757.7L596.9 760.7L590.9 763.6L585.1 766.4L579.4 768.9L574.0 771.3L569.0 773.4L564.2 775.4L559.5 777.2L554.8 778.9L550.0 780.6L545.0 782.2L539.6 783.9L533.8 785.5L527.8 787.2L521.6 788.9L515.3 790.5L508.9 792.0L502.4 793.4L496.1 794.7L489.8 795.8L483.5 796.8L477.2 797.7L470.9 798.5L464.6 799.2L458.3 799.7L452.1 800.1L446.0 800.3L440.1 800.3L434.2 800.0L428.5 799.6L422.8 799.0L417.1 798.2L411.6 797.2L406.1 796.2L400.7 795.0L395.4 793.8L390.1 792.5L385.0 791.1L379.9 789.5L374.9 787.8L370.0 786.0L365.1 784.2L360.3 782.3L355.6 780.4L351.0 778.5L346.4 776.5L341.9 774.4L337.5 772.3L333.2 770.1L329.0 767.8L324.8 765.5L320.8 763.0L316.9 760.5L313.1 757.9L309.5 755.2L305.9 752.4L302.4 749.6L298.9 746.6L295.5 743.5L292.0 740.2L288.5 736.8L285.0 733.2L281.6 729.6L278.1 725.8L274.8 721.9L271.5 717.9L268.2 713.9L265.1 709.9L262.1 705.7L259.1 701.4L256.2 697.0L253.4 692.6L250.7 688.1L248.0 683.7L245.6 679.3L243.2 675.0L241.0 670.9L238.9 666.9L237.0 662.9L235.2 659.0L233.4 655.1L231.8 651.1L230.3 647.0L228.8 642.7L227.3 638.3L226.0 633.6L224.7 628.9L223.6 624.1L222.5 619.2L221.5 614.5L220.6 609.8L219.8 605.4L219.1 601.1L218.5 597.0L217.9 593.0L217.5 589.1L217.2 585.1L216.9 581.2L216.8 577.2L216.8 573.1L216.9 568.9L217.0 564.6L217.3 560.3L217.6 555.9L218.1 551.6L218.7 547.2L219.4 542.7L220.2 538.3L221.1 533.8L222.1 529.3L223.1 524.7L224.3 520.2L225.6 515.6L227.2 511.0L229.0 506.3L231.1 501.5L233.6 496.6L236.4 491.6L239.5 486.5L242.7 481.4L246.2 476.2L249.7 471.1L253.4 466.1L257.0 461.2L260.7 456.4L264.4 451.7L268.2 447.0L272.2 442.4L276.2 437.9L280.3 433.5L284.6 429.1L288.9 424.8L293.2 420.6L297.7 416.4L302.2 412.3L306.7 408.3L311.5 404.4L316.3 400.6L321.4 397.0L326.7 393.5L332.3 390.1L338.3 386.7L344.5 383.5L350.9 380.4L357.3 377.5L363.6 374.8L369.7 372.3L375.4 370.1L380.8 368.1L385.9 366.5L390.8 365.1L395.5 363.9L400.3 362.8L405.1 361.9L410.0 361.0L415.2 360.1L420.5 359.3L425.8 358.4L431.2 357.7L436.7 357.0L442.2 356.5L448.0 356.2L453.8 356.0ZM453.9 354.5L447.9 354.7L442.1 355.0L436.5 355.5L431.0 356.2L425.6 357.0L420.2 357.8L414.9 358.6L409.7 359.5L404.7 360.4L399.9 361.4L395.1 362.4L390.3 363.7L385.3 365.1L380.2 366.7L374.7 368.7L369.0 370.9L362.8 373.4L356.5 376.2L350.1 379.1L343.6 382.2L337.3 385.5L331.3 388.8L325.6 392.2L320.3 395.8L315.1 399.5L310.2 403.3L305.5 407.2L300.8 411.3L296.3 415.4L291.9 419.6L287.5 423.8L283.1 428.1L278.9 432.5L274.7 437.0L270.7 441.6L266.7 446.2L262.9 450.9L259.1 455.6L255.4 460.4L251.8 465.3L248.1 470.3L244.5 475.5L241.1 480.7L237.7 485.8L234.7 491.0L231.8 496.1L229.3 501.0L227.2 505.8L225.3 510.6L223.7 515.3L222.4 520.0L221.2 524.6L220.1 529.1L219.2 533.6L218.3 538.2L217.4 542.7L216.7 547.1L216.1 551.6L215.6 556.0L215.2 560.4L215.0 564.7L214.8 569.0L214.7 573.3L214.8 577.4L214.9 581.5L215.1 585.5L215.4 589.4L215.9 593.4L216.4 597.5L217.0 601.6L217.7 605.9L218.5 610.4L219.4 615.1L220.4 619.8L221.5 624.7L222.7 629.5L224.0 634.3L225.3 639.0L226.7 643.5L228.2 647.8L229.8 651.9L231.5 656.0L233.2 660.0L235.0 663.9L237.0 667.9L239.1 671.9L241.3 676.1L243.6 680.4L246.1 684.8L248.8 689.3L251.5 693.8L254.4 698.3L257.3 702.7L260.3 707.0L263.3 711.2L266.5 715.3L269.7 719.3L273.0 723.3L276.4 727.3L279.9 731.1L283.4 734.8L286.9 738.4L290.4 741.8L293.9 745.1L297.4 748.2L300.9 751.3L304.4 754.2L308.1 757.0L311.8 759.7L315.6 762.3L319.5 764.9L323.6 767.4L327.8 769.8L332.0 772.1L336.4 774.3L340.8 776.4L345.4 778.5L350.0 780.5L354.6 782.5L359.4 784.4L364.2 786.3L369.1 788.2L374.1 789.9L379.1 791.6L384.3 793.2L389.5 794.7L394.8 796.0L400.1 797.3L405.6 798.4L411.1 799.5L416.7 800.4L422.4 801.2L428.2 801.9L434.0 802.3L440.0 802.6L446.0 802.6L452.2 802.4L458.4 802.0L464.8 801.5L471.1 800.8L477.5 800.0L483.8 799.0L490.1 798.0L496.5 796.9L502.9 795.6L509.4 794.2L515.8 792.7L522.2 791.1L528.4 789.4L534.5 787.7L540.3 786.0L545.7 784.3L550.8 782.7L555.6 781.0L560.3 779.3L565.0 777.4L569.9 775.5L574.9 773.3L580.4 771.0L586.1 768.4L591.9 765.6L598.0 762.7L604.2 759.6L610.5 756.4L617.0 753.2L623.6 749.8L630.4 746.4L637.4 743.0L644.6 739.4L652.0 735.7L659.5 731.9L667.1 728.1L674.8 724.2L682.6 720.3L690.4 716.4L698.2 712.5L706.1 708.6L714.0 704.6L722.0 700.6L730.1 696.6L738.4 692.4L746.8 688.2L755.4 683.9L764.4 679.4L773.8 674.7L783.4 669.9L793.1 665.0L802.8 660.1L812.3 655.4L821.6 650.8L830.4 646.4L839.1 642.1L847.8 638.0L856.4 633.9L864.8 629.9L872.8 626.1L880.3 622.4L887.0 619.0L893.0 615.8L898.0 613.0L902.2 610.5L905.7 608.3L908.7 606.2L911.3 604.2L913.6 602.2L915.9 600.0L918.1 597.7L920.4 595.2L922.4 592.7L924.1 590.2L925.7 587.6L927.1 585.0L928.4 582.2L929.6 579.4L930.7 576.5L931.8 573.5L932.6 570.3L933.4 567.0L934.0 563.6L934.5 560.3L935.0 556.9L935.4 553.6L935.8 550.4L936.1 547.3L936.3 544.4L936.5 541.6L936.6 538.8L936.6 535.9L936.7 532.8L936.7 529.5L936.8 525.8L936.8 521.7L936.9 517.1L937.1 512.1L937.1 507.0L937.2 502.0L937.1 497.0L937.0 492.4L936.7 488.3L936.4 484.6L936.0 481.2L935.6 478.1L935.1 475.1L934.4 472.3L933.7 469.6L932.8 466.8L931.7 464.1L930.5 461.4L929.2 458.8L927.7 456.3L926.1 453.9L924.4 451.4L922.5 449.0L920.4 446.5L918.1 443.9L915.6 441.1L912.9 438.2L910.0 435.2L907.0 432.2L903.8 429.2L900.3 426.4L896.7 423.7L892.9 421.2L889.1 419.1L885.7 417.1L882.2 415.2L878.4 413.5L874.0 411.8L868.8 410.3L862.6 408.7L855.1 407.1L846.1 405.6L835.9 404.2L824.7 402.8L812.7 401.5L800.0 400.1L786.9 398.7L773.5 397.3L760.0 395.6L746.3 393.8L731.9 392.0L717.1 390.0L701.9 388.0L686.5 385.9L671.0 383.8L655.5 381.7L640.1 379.6L624.2 377.4L607.5 375.1L590.5 372.7L573.5 370.4L557.1 368.0L541.6 365.8L527.4 363.9L515.1 362.1L504.8 360.6L496.2 359.3L488.9 358.1L482.6 357.1L476.9 356.2L471.5 355.5L466.0 355.0L460.0 354.6Z" fill="#5683cc" fill-rule="evenodd"/>
<path d="M256.0 465.0C251.7 462.0 249.5 461.0 246.0 460.0C242.5 459.0 238.7 458.5 235.0 459.0C231.3 459.5 227.0 460.7 224.0 463.0C221.0 465.3 218.2 469.5 217.0 473.0C215.8 476.5 216.2 480.2 217.0 484.0C217.8 487.8 219.5 492.3 222.0 496.0C224.5 499.7 227.3 502.3 232.0 506.0C236.7 509.7 244.0 514.3 250.0 518.0C256.0 521.7 262.2 525.3 268.0 528.0C273.8 530.7 281.7 537.0 285.0 534.0C288.3 531.0 287.7 517.7 288.0 510.0C288.3 502.3 289.7 493.3 287.0 488.0C284.3 482.7 277.2 481.8 272.0 478.0C266.8 474.2 260.3 468.0 256.0 465.0Z" fill="#507dc7"/>
<ellipse cx="238" cy="477" rx="12.5" ry="10.5" fill="none" stroke="#3a61a8" stroke-width="1.6"/>
<ellipse cx="238" cy="477" rx="7" ry="6" fill="none" stroke="#3a61a8" stroke-width="1.6"/>
<ellipse cx="238" cy="477" rx="2.2" ry="1.8" fill="#5f8cd4"/>
<path d="M548.0 376.5C540.0 375.1 516.3 369.6 500.0 367.8C483.7 366.1 466.7 365.0 450.0 366.0C433.3 367.0 415.8 368.8 400.0 374.0C384.2 379.2 368.3 389.0 355.0 397.5C341.7 406.0 329.6 415.0 320.0 425.0C310.4 435.0 303.2 446.7 297.5 457.5C291.8 468.3 288.5 479.6 286.0 490.0C283.5 500.4 282.9 509.6 282.5 520.0C282.1 530.4 282.6 543.8 283.5 552.5C284.4 561.2 285.4 564.6 288.0 572.0C290.6 579.4 294.9 588.2 299.0 597.0C303.1 605.8 306.9 615.3 312.5 625.0C318.1 634.7 324.6 645.8 332.5 655.0C340.4 664.2 349.6 672.5 360.0 680.0C370.4 687.5 382.9 695.0 395.0 700.0C407.1 705.0 420.0 708.2 432.5 710.0C445.0 711.8 456.2 712.5 470.0 711.0C483.8 709.5 502.1 705.3 515.0 701.0C527.9 696.7 537.1 691.0 547.5 685.0C557.9 679.0 569.2 672.5 577.5 665.0C585.8 657.5 591.8 647.8 597.0 640.0C602.2 632.2 605.8 624.7 609.0 618.0C612.2 611.3 613.8 606.2 616.0 600.0C618.2 593.8 619.8 587.2 622.0 581.0C624.2 574.8 625.9 569.5 629.0 563.0C632.1 556.5 636.5 547.8 640.8 541.9C645.1 536.0 649.7 531.5 654.8 527.8C659.9 524.1 666.1 521.0 671.2 519.6C676.3 518.2 682.9 519.6 685.3 519.6L847.5 542.5L880.0 492.5L880.0 470.0L873.0 467.0L880.0 445.0L880.0 426.0L874.0 424.0L672.5 395.0L666.5 420.0L662.5 438.0L629.0 434.0L631.0 417.0L602.5 402.5Z" fill="url(#wallg)"/>
<path d="M457.0 435.0C443.7 435.3 431.6 437.1 420.0 440.0C408.4 442.9 397.5 447.1 387.5 452.5C377.5 457.9 367.9 465.4 360.0 472.5C352.1 479.6 345.0 487.1 340.0 495.0C335.0 502.9 332.5 511.2 330.0 520.0C327.5 528.8 325.2 538.3 325.0 547.5C324.8 556.7 326.8 566.8 329.0 575.0C331.2 583.2 333.5 589.5 338.0 597.0C342.5 604.5 348.7 613.8 356.0 620.0C363.3 626.2 373.3 630.3 382.0 634.0C390.7 637.7 397.8 640.0 408.0 642.0C418.2 644.0 429.8 646.1 443.0 646.0C456.2 645.9 474.0 644.5 487.0 641.5C500.0 638.5 510.8 633.1 521.0 628.0C531.2 622.9 539.5 617.2 548.0 611.0C556.5 604.8 565.8 597.0 572.0 591.0C578.2 585.0 581.3 580.5 585.0 575.0C588.7 569.5 591.2 564.7 594.0 558.0C596.8 551.3 599.5 542.8 602.0 535.0C604.5 527.2 606.2 519.3 609.0 511.0C611.8 502.7 615.5 492.5 619.0 485.0C622.5 477.5 629.4 469.8 630.0 466.0C630.6 462.2 628.3 464.2 622.5 462.5C616.7 460.8 608.8 459.0 595.0 456.0C581.2 453.0 555.8 447.6 540.0 444.6C524.2 441.6 513.8 439.6 500.0 438.0C486.2 436.4 470.3 434.7 457.0 435.0Z" fill="url(#hatch)"/>
<path d="M600.0 404.0L631.0 418.0L628.0 462.0L622.0 462.0L597.0 456.0Z" fill="#5f8dd5"/>
<line x1="603" y1="407" x2="600" y2="457" stroke="#4d79c2" stroke-width="1"/>
<line x1="608" y1="409" x2="605" y2="458" stroke="#4d79c2" stroke-width="1"/>
<line x1="613" y1="411" x2="610" y2="459" stroke="#4d79c2" stroke-width="1"/>
<line x1="618" y1="414" x2="615" y2="460" stroke="#4d79c2" stroke-width="1"/>
<line x1="623" y1="416" x2="620" y2="461" stroke="#4d79c2" stroke-width="1"/>
<clipPath id="silc"><path d="M548.0 376.5C540.0 375.1 516.3 369.6 500.0 367.8C483.7 366.1 466.7 365.0 450.0 366.0C433.3 367.0 415.8 368.8 400.0 374.0C384.2 379.2 368.3 389.0 355.0 397.5C341.7 406.0 329.6 415.0 320.0 425.0C310.4 435.0 303.2 446.7 297.5 457.5C291.8 468.3 288.5 479.6 286.0 490.0C283.5 500.4 282.9 509.6 282.5 520.0C282.1 530.4 282.6 543.8 283.5 552.5C284.4 561.2 285.4 564.6 288.0 572.0C290.6 579.4 294.9 588.2 299.0 597.0C303.1 605.8 306.9 615.3 312.5 625.0C318.1 634.7 324.6 645.8 332.5 655.0C340.4 664.2 349.6 672.5 360.0 680.0C370.4 687.5 382.9 695.0 395.0 700.0C407.1 705.0 420.0 708.2 432.5 710.0C445.0 711.8 456.2 712.5 470.0 711.0C483.8 709.5 502.1 705.3 515.0 701.0C527.9 696.7 537.1 691.0 547.5 685.0C557.9 679.0 569.2 672.5 577.5 665.0C585.8 657.5 591.8 647.8 597.0 640.0C602.2 632.2 605.8 624.7 609.0 618.0C612.2 611.3 613.8 606.2 616.0 600.0C618.2 593.8 619.8 587.2 622.0 581.0C624.2 574.8 625.9 569.5 629.0 563.0C632.1 556.5 636.5 547.8 640.8 541.9C645.1 536.0 649.7 531.5 654.8 527.8C659.9 524.1 666.1 521.0 671.2 519.6C676.3 518.2 682.9 519.6 685.3 519.6L847.5 542.5L880.0 492.5L880.0 470.0L873.0 467.0L880.0 445.0L880.0 426.0L874.0 424.0L672.5 395.0L666.5 420.0L662.5 438.0L629.0 434.0L631.0 417.0L602.5 402.5Z"/></clipPath>
<g clip-path="url(#silc)"><path d="M292.0 575.0C293.8 578.7 298.8 589.8 303.0 597.0C307.2 604.2 311.5 610.2 317.5 618.0C323.5 625.8 330.1 636.8 339.0 644.0C347.9 651.2 360.5 656.6 371.0 661.0C381.5 665.4 390.0 668.2 402.0 670.5C414.0 672.8 427.8 675.1 443.0 675.0C458.2 674.9 477.9 673.4 493.0 670.0C508.1 666.6 521.1 660.6 533.4 654.6C545.7 648.6 556.5 641.3 566.6 634.0C576.7 626.7 586.7 618.1 594.0 611.0C601.3 603.9 605.7 598.2 610.4 591.5C615.1 584.8 618.6 578.2 622.0 570.5C625.4 562.8 628.3 553.1 631.0 545.0C633.7 536.9 636.8 525.6 638.0 521.7" fill="none" stroke="#4f7cc6" stroke-width="6" transform="translate(0,2)"/><path d="M292.0 575.0C293.8 578.7 298.8 589.8 303.0 597.0C307.2 604.2 311.5 610.2 317.5 618.0C323.5 625.8 330.1 636.8 339.0 644.0C347.9 651.2 360.5 656.6 371.0 661.0C381.5 665.4 390.0 668.2 402.0 670.5C414.0 672.8 427.8 675.1 443.0 675.0C458.2 674.9 477.9 673.4 493.0 670.0C508.1 666.6 521.1 660.6 533.4 654.6C545.7 648.6 556.5 641.3 566.6 634.0C576.7 626.7 586.7 618.1 594.0 611.0C601.3 603.9 605.7 598.2 610.4 591.5C615.1 584.8 618.6 578.2 622.0 570.5C625.4 562.8 628.3 553.1 631.0 545.0C633.7 536.9 636.8 525.6 638.0 521.7" fill="none" stroke="#527fc9" stroke-width="5" transform="translate(0,6)"/></g>
<path d="M631.0 417.0C626.2 414.6 616.3 409.2 602.5 402.5C588.7 395.8 565.1 382.3 548.0 376.5C530.9 370.7 516.3 369.6 500.0 367.8C483.7 366.1 466.7 365.0 450.0 366.0C433.3 367.0 415.8 368.8 400.0 374.0C384.2 379.2 368.3 389.0 355.0 397.5C341.7 406.0 329.6 415.0 320.0 425.0C310.4 435.0 303.2 446.7 297.5 457.5C291.8 468.3 288.5 479.6 286.0 490.0C283.5 500.4 282.7 510.3 282.5 520.0C282.3 529.7 283.4 538.8 285.0 548.0C286.6 557.2 289.0 566.8 292.0 575.0C295.0 583.2 298.8 589.8 303.0 597.0C307.2 604.2 311.5 610.2 317.5 618.0C323.5 625.8 330.1 636.8 339.0 644.0C347.9 651.2 360.5 656.6 371.0 661.0C381.5 665.4 390.0 668.2 402.0 670.5C414.0 672.8 427.8 675.1 443.0 675.0C458.2 674.9 477.9 673.4 493.0 670.0C508.1 666.6 521.1 660.6 533.4 654.6C545.7 648.6 556.5 641.3 566.6 634.0C576.7 626.7 586.7 618.1 594.0 611.0C601.3 603.9 605.7 598.2 610.4 591.5C615.1 584.8 618.6 578.2 622.0 570.5C625.4 562.8 628.3 553.1 631.0 545.0C633.7 536.9 635.5 529.4 638.0 521.7C640.5 514.0 643.3 504.9 646.0 498.6C648.7 492.3 651.2 489.2 654.0 484.0C656.8 478.8 658.7 471.1 663.0 467.5C667.3 463.9 670.5 463.1 680.0 462.5C689.5 461.9 688.0 459.8 720.0 464.0C752.0 468.2 846.7 484.0 872.0 488.0L872.1 486.4C846.7 482.4 752.2 466.7 720.0 462.4C687.8 458.1 688.6 460.2 679.0 460.7C669.3 461.3 666.4 462.1 662.0 465.7C657.5 469.3 655.1 477.0 652.1 482.3C649.0 487.5 646.4 491.0 643.6 497.4C640.9 503.8 638.0 513.0 635.5 520.8C632.9 528.6 631.1 536.0 628.5 544.1C625.8 552.2 622.9 561.8 619.6 569.4C616.2 577.1 612.8 583.4 608.2 590.1C603.6 596.7 599.3 602.3 592.1 609.3C584.9 616.2 574.9 624.8 565.0 632.0C555.0 639.2 544.4 646.4 532.3 652.3C520.2 658.2 507.4 664.1 492.5 667.5C477.6 670.9 458.0 672.4 443.0 672.5C428.0 672.6 414.4 670.3 402.5 668.0C390.7 665.7 382.3 663.0 372.0 658.6C361.6 654.3 349.2 649.0 340.5 641.9C331.7 634.8 325.3 623.9 319.4 616.2C313.5 608.4 309.3 602.6 305.2 595.5C301.0 588.5 297.4 581.9 294.4 573.9C291.5 565.9 289.2 556.4 287.6 547.4C286.1 538.4 285.1 529.6 285.2 520.1C285.4 510.6 286.1 500.9 288.5 490.6C290.9 480.4 294.1 469.3 299.7 458.5C305.2 447.8 312.3 436.2 321.7 426.3C331.2 416.4 343.1 407.5 356.2 399.0C369.3 390.6 384.7 380.9 400.3 375.7C416.0 370.5 433.4 368.7 450.0 367.7C466.6 366.7 483.6 367.8 499.9 369.5C516.2 371.1 530.7 372.2 547.7 377.8C564.8 383.4 588.4 396.4 602.3 403.0C616.1 409.5 626.0 414.8 630.7 417.2Z" fill="#5683cc"/>
<path d="M630.8 417.2C626.0 414.8 616.1 409.5 602.3 403.0C588.5 396.4 564.8 383.3 547.8 377.8C530.7 372.2 516.2 371.1 499.9 369.4C483.6 367.7 466.6 366.6 450.0 367.6C433.4 368.7 416.0 370.4 400.3 375.6C384.7 380.8 369.3 390.5 356.2 399.0C343.1 407.4 331.1 416.3 321.7 426.2C312.2 436.2 305.1 447.8 299.6 458.5C294.0 469.2 290.8 480.3 288.4 490.6C286.0 500.8 285.2 510.6 285.1 520.1C284.9 529.6 286.0 538.4 287.5 547.4C289.0 556.4 291.4 565.9 294.3 574.0C297.3 582.0 300.9 588.5 305.1 595.6C309.2 602.6 313.4 608.5 319.3 616.2C325.2 624.0 331.6 634.9 340.4 642.0C349.2 649.1 361.6 654.4 371.9 658.8C382.3 663.1 390.7 665.8 402.5 668.1C414.3 670.4 428.0 672.7 443.0 672.6C458.0 672.5 477.6 671.0 492.5 667.6C507.4 664.3 520.3 658.3 532.4 652.4C544.5 646.5 555.1 639.3 565.1 632.1C575.0 624.9 585.0 616.3 592.2 609.3C599.4 602.3 603.7 596.8 608.3 590.1C612.9 583.5 616.3 577.1 619.7 569.5C623.0 561.8 625.9 552.3 628.6 544.2C631.2 536.1 633.1 528.6 635.6 520.8C638.1 513.0 641.0 503.9 643.8 497.5C646.5 491.1 649.1 487.6 652.2 482.3C655.2 477.0 657.5 469.3 662.0 465.8C666.5 462.2 669.3 461.4 679.0 460.8C688.7 460.3 687.8 458.2 720.0 462.5C752.2 466.8 846.7 482.5 872.1 486.5L872.2 484.9C846.8 480.9 752.4 465.2 720.0 460.9C687.6 456.6 687.8 458.5 678.0 459.1C668.1 459.6 665.6 460.3 661.0 463.9C656.3 467.5 653.5 475.2 650.2 480.6C647.0 486.0 644.3 489.7 641.4 496.3C638.5 502.8 635.6 512.0 633.1 519.9C630.5 527.7 628.7 535.2 626.1 543.3C623.4 551.4 620.6 560.8 617.2 568.4C613.9 575.9 610.6 582.1 606.1 588.7C601.6 595.2 597.4 600.7 590.2 607.6C583.1 614.5 573.3 623.0 563.4 630.1C553.6 637.2 543.2 644.2 531.3 650.1C519.4 655.9 506.7 661.8 492.0 665.1C477.3 668.5 457.8 670.0 443.0 670.1C428.2 670.1 414.7 667.9 403.0 665.6C391.3 663.4 383.1 660.7 372.9 656.4C362.7 652.1 350.5 646.9 341.9 639.9C333.3 632.9 326.9 622.1 321.2 614.4C315.4 606.8 311.3 601.0 307.3 594.1C303.2 587.2 299.6 580.7 296.8 572.9C293.9 565.0 291.6 555.6 290.1 546.8C288.6 538.0 287.7 529.4 287.8 520.2C287.9 510.9 288.6 501.3 290.9 491.2C293.3 481.1 296.4 470.2 301.8 459.5C307.2 448.9 314.1 437.4 323.4 427.6C332.7 417.7 344.5 408.9 357.4 400.5C370.3 392.1 385.2 382.5 400.7 377.3C416.1 372.1 433.5 370.4 450.0 369.3C466.5 368.3 483.6 369.4 499.8 371.0C516.1 372.7 530.4 373.7 547.5 379.1C564.5 384.5 588.2 397.1 602.1 403.4C615.9 409.8 625.8 415.0 630.5 417.3Z" fill="#4a76c0"/>
<path d="M630.5 417.3C625.8 415.0 615.9 409.8 602.1 403.4C588.2 397.0 564.5 384.4 547.5 379.0C530.5 373.6 516.1 372.6 499.8 371.0C483.6 369.3 466.5 368.2 450.0 369.2C433.5 370.3 416.1 372.1 400.7 377.2C385.2 382.4 370.2 392.0 357.3 400.4C344.4 408.8 332.6 417.7 323.3 427.5C314.1 437.3 307.1 448.9 301.7 459.5C296.2 470.1 293.2 481.1 290.8 491.2C288.5 501.3 287.8 510.9 287.7 520.2C287.5 529.4 288.5 538.0 290.0 546.8C291.5 555.6 293.8 565.0 296.7 572.9C299.5 580.8 303.1 587.2 307.2 594.2C311.2 601.1 315.3 606.9 321.1 614.5C326.9 622.1 333.2 633.0 341.8 640.0C350.5 647.0 362.6 652.2 372.8 656.5C383.0 660.8 391.3 663.5 403.0 665.8C414.7 668.0 428.2 670.2 443.0 670.2C457.8 670.1 477.3 668.6 492.0 665.2C506.7 661.9 519.4 656.0 531.3 650.2C543.2 644.3 553.7 637.2 563.5 630.2C573.3 623.1 583.2 614.6 590.3 607.7C597.4 600.8 601.7 595.3 606.2 588.8C610.7 582.2 614.0 576.0 617.3 568.4C620.7 560.8 623.5 551.4 626.2 543.3C628.8 535.2 630.6 527.8 633.2 519.9C635.7 512.1 638.6 502.9 641.5 496.3C644.4 489.8 647.1 486.1 650.3 480.7C653.6 475.3 656.4 467.6 661.0 464.0C665.6 460.4 668.2 459.6 678.0 459.1C687.8 458.6 687.6 456.7 720.0 461.0C752.4 465.3 846.8 481.0 872.2 485.0L872.3 483.4C846.9 479.4 752.6 463.7 720.0 459.4C687.4 455.0 687.0 456.9 677.0 457.4C666.9 457.8 664.7 458.6 660.0 462.2C655.2 465.8 651.9 473.4 648.4 478.9C644.9 484.4 642.1 488.5 639.1 495.1C636.2 501.8 633.2 511.1 630.6 519.0C628.0 526.9 626.3 534.4 623.6 542.5C621.0 550.5 618.2 559.9 614.9 567.3C611.6 574.8 608.4 580.9 603.9 587.3C599.5 593.7 595.4 599.1 588.4 605.9C581.4 612.7 571.6 621.2 561.9 628.2C552.2 635.1 542.0 642.1 530.3 647.8C518.5 653.6 506.0 659.5 491.5 662.8C476.9 666.1 457.7 667.6 443.0 667.6C428.3 667.7 415.1 665.5 403.5 663.3C392.0 661.0 383.8 658.4 373.8 654.1C363.8 649.9 351.8 644.8 343.3 637.9C334.8 631.0 328.6 620.2 323.0 612.7C317.3 605.1 313.3 599.5 309.4 592.7C305.4 585.9 301.9 579.6 299.1 571.8C296.3 564.1 294.1 554.8 292.6 546.2C291.2 537.6 290.2 529.3 290.4 520.3C290.5 511.2 291.1 501.7 293.4 491.8C295.6 481.8 298.6 471.0 303.9 460.5C309.1 450.1 316.0 438.6 325.1 428.8C334.2 419.0 345.9 410.3 358.6 401.9C371.2 393.6 385.8 384.1 401.0 379.0C416.3 373.8 433.5 372.0 450.0 371.0C466.5 369.9 483.5 371.1 499.7 372.6C516.0 374.2 530.2 375.1 547.2 380.3C564.3 385.5 588.0 397.7 601.9 403.9C615.7 410.1 625.5 415.2 630.2 417.5Z" fill="#3f69b2"/>
<path d="M630.2 417.5C625.5 415.2 615.7 410.1 601.9 403.9C588.0 397.7 564.3 385.5 547.2 380.2C530.2 375.0 516.0 374.1 499.8 372.6C483.5 371.0 466.5 369.8 450.0 370.9C433.5 371.9 416.2 373.7 401.0 378.9C385.8 384.0 371.2 393.6 358.5 401.9C345.8 410.2 334.1 419.0 325.0 428.8C315.9 438.5 309.0 450.0 303.8 460.5C298.5 471.0 295.5 481.8 293.2 491.8C291.0 501.7 290.4 511.2 290.2 520.2C290.1 529.3 291.0 537.6 292.5 546.2C294.0 554.9 296.2 564.1 299.0 571.9C301.8 579.6 305.3 585.9 309.2 592.8C313.2 599.6 317.2 605.2 322.9 612.8C328.5 620.3 334.8 631.1 343.2 638.0C351.7 644.9 363.7 650.0 373.8 654.2C383.8 658.5 392.0 661.1 403.5 663.4C415.0 665.6 428.3 667.8 443.0 667.8C457.7 667.7 476.9 666.2 491.5 662.9C506.1 659.6 518.6 653.7 530.3 648.0C542.0 642.2 552.2 635.2 562.0 628.2C571.7 621.3 581.5 612.8 588.5 606.0C595.5 599.2 599.6 593.8 604.0 587.4C608.5 580.9 611.7 574.9 615.0 567.4C618.3 559.9 621.1 550.6 623.8 542.5C626.4 534.4 628.2 526.9 630.8 519.0C633.3 511.1 636.3 501.9 639.2 495.2C642.2 488.5 645.0 484.5 648.5 479.0C652.0 473.5 655.2 465.8 660.0 462.2C664.8 458.7 667.0 457.9 677.0 457.4C687.0 457.0 687.5 455.1 720.0 459.4C752.5 463.8 846.9 479.5 872.2 483.5L872.3 481.9C846.9 477.9 752.7 462.2 720.0 457.9C687.3 453.5 686.1 455.3 676.0 455.7C665.8 456.1 663.8 456.8 659.0 460.4C654.1 464.0 650.3 471.7 646.6 477.3C642.9 482.9 640.0 487.2 636.9 494.0C633.8 500.8 630.8 510.2 628.2 518.1C625.6 526.0 623.8 533.6 621.2 541.6C618.6 549.7 615.8 558.9 612.6 566.3C609.3 573.7 606.2 579.6 601.8 585.9C597.5 592.3 593.5 597.5 586.6 604.3C579.7 611.0 569.9 619.3 560.3 626.2C550.8 633.1 540.8 639.9 529.2 645.6C517.7 651.3 505.3 657.1 491.0 660.4C476.6 663.7 457.5 665.1 443.0 665.2C428.5 665.3 415.4 663.1 404.0 660.9C392.6 658.7 384.6 656.1 374.7 651.9C364.8 647.7 353.1 642.7 344.7 635.9C336.4 629.1 330.3 618.4 324.8 610.9C319.2 603.5 315.3 598.0 311.4 591.3C307.5 584.6 304.2 578.4 301.4 570.8C298.7 563.2 296.5 554.0 295.1 545.6C293.7 537.2 292.8 529.2 293.0 520.3C293.1 511.5 293.6 502.2 295.8 492.4C297.9 482.6 300.8 471.9 305.9 461.5C311.1 451.2 317.8 439.8 326.7 430.1C335.7 420.4 347.3 411.7 359.7 403.4C372.2 395.2 386.3 385.7 401.3 380.6C416.4 375.4 433.6 373.6 450.0 372.6C466.4 371.5 483.5 372.7 499.7 374.2C515.8 375.7 530.0 376.5 547.0 381.6C564.0 386.6 587.8 398.3 601.7 404.4C615.5 410.4 625.3 415.5 630.0 417.7Z" fill="#34589d"/>
<path d="M630.0 417.7C625.3 415.4 615.5 410.4 601.7 404.3C587.8 398.3 564.0 386.5 547.0 381.5C530.0 376.5 515.8 375.6 499.7 374.1C483.5 372.6 466.4 371.4 450.0 372.5C433.6 373.6 416.4 375.4 401.3 380.5C386.3 385.6 372.1 395.1 359.7 403.3C347.2 411.6 335.6 420.3 326.7 430.0C317.7 439.7 311.0 451.1 305.8 461.5C300.7 471.9 297.8 482.5 295.7 492.3C293.5 502.1 292.9 511.4 292.8 520.3C292.7 529.2 293.6 537.2 295.0 545.7C296.4 554.1 298.6 563.2 301.3 570.8C304.1 578.4 307.4 584.6 311.3 591.3C315.2 598.0 319.1 603.6 324.7 611.0C330.2 618.4 336.3 629.2 344.7 636.0C353.0 642.8 364.8 647.8 374.7 652.0C384.6 656.2 392.6 658.8 404.0 661.0C415.4 663.2 428.5 665.4 443.0 665.3C457.5 665.2 476.6 663.8 491.0 660.5C505.4 657.2 517.7 651.4 529.3 645.7C540.8 640.0 550.8 633.2 560.4 626.3C570.0 619.4 579.7 611.1 586.7 604.3C593.6 597.6 597.6 592.3 601.9 586.0C606.3 579.7 609.4 573.7 612.7 566.3C615.9 558.9 618.7 549.7 621.3 541.7C623.9 533.6 625.7 526.1 628.3 518.1C630.9 510.2 633.9 500.9 637.0 494.1C640.1 487.3 643.0 482.9 646.7 477.3C650.3 471.7 654.1 464.1 659.0 460.5C663.9 456.9 665.8 456.2 676.0 455.8C686.2 455.3 687.3 453.6 720.0 457.9C752.7 462.3 846.9 478.0 872.3 482.0L872.4 480.4C847.0 476.4 752.9 460.7 720.0 456.3C687.1 451.9 685.3 453.6 675.0 454.0C664.6 454.4 663.0 455.1 658.0 458.7C652.9 462.3 648.6 469.9 644.7 475.6C640.9 481.3 637.8 485.9 634.6 492.9C631.5 499.8 628.4 509.2 625.8 517.2C623.2 525.2 621.4 532.8 618.8 540.8C616.2 548.8 613.4 557.9 610.2 565.2C607.0 572.5 604.0 578.3 599.7 584.6C595.5 590.8 591.6 596.0 584.7 602.6C577.9 609.2 568.2 617.5 558.8 624.3C549.3 631.1 539.6 637.8 528.2 643.4C516.8 649.0 504.7 654.8 490.5 658.0C476.3 661.2 457.3 662.7 443.0 662.8C428.7 662.9 415.8 660.7 404.5 658.5C393.3 656.3 385.4 653.7 375.6 649.6C365.9 645.5 354.3 640.6 346.2 633.9C338.0 627.2 332.0 616.5 326.5 609.2C321.1 601.8 317.3 596.4 313.5 589.8C309.7 583.3 306.4 577.2 303.8 569.7C301.1 562.3 299.0 553.3 297.6 545.1C296.2 536.8 295.4 529.1 295.5 520.4C295.6 511.7 296.1 502.6 298.2 492.9C300.3 483.3 303.0 472.8 308.0 462.5C313.1 452.3 319.6 440.9 328.4 431.3C337.2 421.7 348.7 413.0 360.9 404.9C373.1 396.7 386.8 387.3 401.7 382.2C416.5 377.1 433.7 375.3 450.0 374.2C466.3 373.1 483.5 374.4 499.6 375.8C515.7 377.2 529.8 378.0 546.7 382.8C563.7 387.6 587.6 399.0 601.4 404.8C615.3 410.7 625.0 415.7 629.7 417.8Z" fill="#5683cc"/>
<path d="M629.8 417.8C625.0 415.7 615.3 410.6 601.5 404.8C587.6 398.9 563.7 387.6 546.8 382.8C529.8 377.9 515.7 377.2 499.6 375.7C483.5 374.3 466.3 373.1 450.0 374.1C433.7 375.2 416.5 377.0 401.7 382.1C386.8 387.2 373.1 396.6 360.8 404.8C348.6 413.0 337.2 421.6 328.3 431.2C319.5 440.9 313.0 452.2 307.9 462.5C302.9 472.8 300.2 483.3 298.1 492.9C296.0 502.6 295.5 511.7 295.4 520.4C295.3 529.1 296.1 536.9 297.5 545.1C298.9 553.3 301.0 562.3 303.7 569.8C306.3 577.3 309.6 583.3 313.4 589.9C317.2 596.5 321.0 601.9 326.5 609.2C331.9 616.6 337.9 627.2 346.1 634.0C354.3 640.8 365.8 645.6 375.6 649.8C385.3 653.9 393.3 656.4 404.5 658.6C415.7 660.8 428.7 663.0 443.0 662.9C457.3 662.8 476.3 661.4 490.5 658.1C504.7 654.9 516.8 649.1 528.2 643.5C539.6 637.9 549.4 631.2 558.9 624.4C568.3 617.6 578.0 609.3 584.8 602.7C591.7 596.0 595.6 590.9 599.8 584.6C604.1 578.4 607.2 572.6 610.3 565.3C613.5 558.0 616.3 548.8 618.9 540.8C621.5 532.8 623.3 525.2 625.9 517.2C628.6 509.3 631.6 499.9 634.8 492.9C637.9 486.0 641.0 481.4 644.8 475.7C648.7 470.0 653.0 462.3 658.0 458.8C663.0 455.2 664.7 454.5 675.0 454.1C685.3 453.7 687.1 452.0 720.0 456.4C752.9 460.8 847.0 476.5 872.4 480.5L872.5 478.9C847.1 474.9 753.1 459.3 720.0 454.8C686.9 450.4 684.5 452.0 674.0 452.3C663.4 452.7 662.1 453.3 657.0 456.9C651.8 460.5 647.0 468.1 642.9 473.9C638.8 479.7 635.6 484.7 632.4 491.7C629.1 498.8 626.1 508.3 623.4 516.3C620.7 524.3 619.0 532.0 616.4 540.0C613.8 547.9 611.0 557.0 607.9 564.2C604.8 571.4 601.8 577.1 597.6 583.2C593.4 589.3 589.6 594.4 582.9 600.9C576.2 607.5 566.5 615.7 557.2 622.4C547.9 629.1 538.4 635.7 527.2 641.2C515.9 646.7 504.0 652.4 490.0 655.6C476.0 658.8 457.2 660.3 443.0 660.4C428.8 660.5 416.1 658.3 405.0 656.1C393.9 654.0 386.1 651.4 376.5 647.4C367.0 643.4 355.6 638.6 347.6 631.9C339.5 625.2 333.7 614.7 328.3 607.4C323.0 600.2 319.3 594.9 315.6 588.4C311.9 582.0 308.7 576.0 306.1 568.7C303.5 561.4 301.5 552.5 300.1 544.5C298.8 536.4 298.0 529.0 298.1 520.5C298.2 512.0 298.6 503.0 300.6 493.5C302.6 484.0 305.2 473.7 310.1 463.5C315.0 453.4 321.4 442.1 330.1 432.6C338.7 423.0 350.1 414.4 362.1 406.3C374.0 398.2 387.4 388.9 402.0 383.8C416.7 378.7 433.8 376.9 450.0 375.8C466.2 374.8 483.4 376.0 499.5 377.4C515.6 378.7 529.5 379.4 546.5 384.1C563.4 388.7 587.4 399.6 601.2 405.3C615.1 410.9 624.8 415.9 629.5 418.0Z" fill="#4a76c0"/>
<path d="M629.5 418.0C624.8 415.9 615.1 410.9 601.2 405.2C587.4 399.6 563.5 388.7 546.5 384.0C529.5 379.3 515.6 378.7 499.5 377.3C483.4 375.9 466.2 374.7 450.0 375.8C433.8 376.8 416.7 378.7 402.0 383.8C387.3 388.8 374.0 398.1 362.0 406.2C350.0 414.4 338.7 423.0 330.0 432.5C321.3 442.0 314.9 453.3 310.0 463.5C305.1 473.7 302.5 484.0 300.5 493.5C298.5 503.0 298.1 512.0 298.0 520.5C297.9 529.0 298.7 536.5 300.0 544.5C301.3 552.5 303.4 561.4 306.0 568.8C308.6 576.1 311.8 582.0 315.5 588.5C319.2 595.0 322.9 600.2 328.2 607.5C333.6 614.8 339.5 625.3 347.5 632.0C355.5 638.7 366.9 643.5 376.5 647.5C386.1 651.5 393.9 654.1 405.0 656.2C416.1 658.4 428.8 660.6 443.0 660.5C457.2 660.4 476.0 659.0 490.0 655.8C504.0 652.5 516.0 646.8 527.2 641.3C538.4 635.8 548.0 629.2 557.3 622.5C566.6 615.8 576.3 607.5 583.0 601.0C589.7 594.5 593.5 589.4 597.7 583.2C601.9 577.1 604.9 571.5 608.0 564.2C611.1 557.0 613.9 548.0 616.5 540.0C619.1 532.0 620.8 524.4 623.5 516.4C626.2 508.3 629.2 498.9 632.5 491.8C635.8 484.7 638.9 479.8 643.0 474.0C647.1 468.2 651.8 460.6 657.0 457.0C662.2 453.4 663.5 452.8 674.0 452.4C684.5 452.0 686.9 450.5 720.0 454.9C753.1 459.3 847.1 475.0 872.5 479.0L872.6 477.4C847.2 473.4 753.3 457.8 720.0 453.3C686.7 448.8 683.6 450.3 673.0 450.6C662.3 450.9 661.3 451.6 656.0 455.2C650.6 458.8 645.4 466.3 641.1 472.3C636.8 478.2 633.5 483.4 630.1 490.6C626.8 497.8 623.7 507.3 621.0 515.4C618.3 523.5 616.5 531.2 614.0 539.1C611.4 547.1 608.6 556.0 605.6 563.2C602.5 570.3 599.6 575.8 595.5 581.8C591.4 587.8 587.7 592.8 581.1 599.3C574.4 605.7 564.8 613.9 555.7 620.5C546.5 627.1 537.2 633.5 526.1 639.0C515.1 644.4 503.3 650.1 489.5 653.3C475.6 656.4 457.0 657.9 443.0 658.0C429.0 658.1 416.4 655.9 405.5 653.8C394.6 651.6 386.9 649.1 377.5 645.1C368.0 641.2 356.9 636.5 349.0 629.9C341.1 623.3 335.3 612.8 330.1 605.7C324.9 598.5 321.3 593.3 317.7 587.0C314.1 580.7 311.0 574.8 308.4 567.7C305.9 560.5 303.9 551.7 302.6 543.9C301.3 536.0 300.6 528.9 300.7 520.6C300.8 512.3 301.1 503.5 303.0 494.1C304.9 484.8 307.4 474.6 312.2 464.5C317.0 454.5 323.2 443.3 331.7 433.8C340.3 424.3 351.5 415.8 363.2 407.8C375.0 399.7 387.9 390.5 402.3 385.5C416.8 380.4 433.8 378.5 450.0 377.5C466.2 376.4 483.4 377.6 499.4 379.0C515.5 380.3 529.3 380.8 546.2 385.3C563.2 389.8 587.2 400.3 601.0 405.7C614.9 411.2 624.5 416.1 629.2 418.2Z" fill="#3f69b2"/>
<path d="M629.2 418.2C624.5 416.1 614.9 411.2 601.0 405.7C587.2 400.2 563.2 389.7 546.2 385.2C529.3 380.8 515.5 380.2 499.4 378.9C483.4 377.6 466.2 376.3 450.0 377.4C433.8 378.5 416.8 380.3 402.3 385.4C387.9 390.4 374.9 399.6 363.2 407.7C351.4 415.8 340.2 424.3 331.7 433.8C323.2 443.2 316.9 454.4 312.1 464.5C307.3 474.6 304.8 484.7 302.9 494.1C301.0 503.4 300.7 512.3 300.6 520.6C300.5 528.9 301.2 536.1 302.5 543.9C303.8 551.8 305.8 560.5 308.3 567.7C310.8 574.9 314.0 580.7 317.6 587.1C321.2 593.4 324.8 598.6 330.0 605.8C335.3 612.9 341.0 623.4 348.9 630.0C356.8 636.6 368.0 641.3 377.4 645.2C386.8 649.2 394.6 651.7 405.5 653.9C416.4 656.0 429.0 658.2 443.0 658.1C457.0 658.0 475.6 656.5 489.5 653.4C503.4 650.2 515.1 644.5 526.2 639.1C537.2 633.6 546.6 627.2 555.8 620.6C564.9 614.0 574.5 605.8 581.2 599.3C587.8 592.9 591.5 587.9 595.6 581.9C599.7 575.9 602.6 570.3 605.7 563.2C608.8 556.1 611.5 547.1 614.1 539.2C616.7 531.2 618.4 523.5 621.1 515.5C623.8 507.4 626.9 497.9 630.2 490.7C633.6 483.5 636.9 478.2 641.2 472.3C645.5 466.4 650.7 458.9 656.0 455.2C661.3 451.6 662.3 451.0 673.0 450.7C683.7 450.4 686.7 448.9 720.0 453.4C753.3 457.8 847.2 473.5 872.6 477.5L872.7 475.9C847.2 471.9 753.5 456.3 720.0 451.8C686.5 447.3 682.8 448.7 672.0 449.0C661.1 449.2 660.4 449.8 655.0 453.4C649.5 457.0 643.8 464.6 639.2 470.6C634.7 476.6 631.3 482.2 627.9 489.5C624.4 496.8 621.3 506.4 618.6 514.5C615.8 522.7 614.1 530.4 611.6 538.3C609.0 546.2 606.3 555.1 603.2 562.1C600.2 569.1 597.4 574.5 593.4 580.4C589.4 586.3 585.8 591.2 579.2 597.6C572.7 603.9 563.2 612.0 554.1 618.6C545.1 625.1 535.9 631.4 525.1 636.8C514.2 642.1 502.7 647.8 489.0 650.9C475.3 654.0 456.8 655.5 443.0 655.6C429.2 655.6 416.8 653.5 406.0 651.4C395.3 649.3 387.6 646.8 378.4 642.9C369.1 639.0 358.1 634.4 350.4 627.9C342.7 621.4 337.0 611.0 331.9 603.9C326.8 596.9 323.3 591.8 319.8 585.6C316.2 579.4 313.2 573.7 310.8 566.6C308.3 559.6 306.4 551.0 305.1 543.3C303.9 535.6 303.2 528.8 303.3 520.7C303.3 512.6 303.6 503.9 305.4 494.7C307.3 485.5 309.6 475.5 314.3 465.5C318.9 455.6 325.1 444.4 333.4 435.1C341.8 425.7 352.8 417.2 364.4 409.2C375.9 401.2 388.4 392.1 402.7 387.1C417.0 382.1 433.9 380.2 450.0 379.1C466.1 378.0 483.3 379.3 499.3 380.5C515.3 381.8 529.1 382.3 546.0 386.6C562.9 390.8 587.0 400.9 600.8 406.2C614.7 411.5 624.3 416.3 629.0 418.3Z" fill="#34589d"/>
<path d="M629.0 418.3C624.3 416.3 614.7 411.5 600.8 406.2C587.0 400.9 562.9 390.8 546.0 386.5C529.1 382.2 515.3 381.7 499.3 380.5C483.3 379.2 466.1 377.9 450.0 379.0C433.9 380.1 416.9 382.0 402.7 387.0C388.4 392.0 375.9 401.2 364.3 409.2C352.8 417.2 341.7 425.6 333.3 435.0C325.0 444.4 318.8 455.6 314.2 465.5C309.5 475.4 307.2 485.5 305.3 494.7C303.5 503.9 303.2 512.6 303.2 520.7C303.1 528.8 303.8 535.7 305.0 543.3C306.2 551.0 308.2 559.6 310.7 566.7C313.1 573.7 316.1 579.4 319.7 585.7C323.2 591.9 326.7 596.9 331.8 604.0C336.9 611.1 342.6 621.5 350.3 628.0C358.1 634.5 369.1 639.1 378.3 643.0C387.6 646.9 395.2 649.4 406.0 651.5C416.8 653.6 429.2 655.8 443.0 655.7C456.8 655.6 475.3 654.1 489.0 651.0C502.7 647.9 514.3 642.3 525.1 636.9C536.0 631.5 545.2 625.2 554.2 618.7C563.2 612.1 572.8 604.0 579.3 597.7C585.9 591.3 589.5 586.4 593.5 580.5C597.5 574.6 600.3 569.2 603.3 562.2C606.4 555.1 609.1 546.3 611.7 538.3C614.2 530.4 615.9 522.7 618.7 514.6C621.4 506.4 624.6 496.9 628.0 489.5C631.4 482.2 634.8 476.7 639.3 470.7C643.8 464.7 649.6 457.1 655.0 453.5C660.4 449.9 661.2 449.3 672.0 449.0C682.8 448.8 686.6 447.4 720.0 451.9C753.4 456.4 847.2 472.0 872.7 476.0L872.8 474.4C847.3 470.4 753.6 454.8 720.0 450.3C686.4 445.8 682.0 447.0 671.0 447.3C659.9 447.5 659.5 448.1 654.0 451.7C648.4 455.3 642.1 462.8 637.4 468.9C632.7 475.0 629.2 480.9 625.6 488.3C622.1 495.8 618.9 505.4 616.1 513.6C613.4 521.8 611.7 529.6 609.1 537.5C606.6 545.4 603.9 554.1 600.9 561.1C597.9 568.0 595.2 573.3 591.2 579.1C587.3 584.9 583.9 589.7 577.4 595.9C571.0 602.2 561.5 610.2 552.6 616.7C543.7 623.1 534.7 629.2 524.1 634.5C513.4 639.9 502.0 645.4 488.5 648.5C475.0 651.6 456.7 653.1 443.0 653.1C429.3 653.2 417.1 651.1 406.5 649.0C395.9 646.9 388.4 644.5 379.3 640.6C370.2 636.8 359.4 632.3 351.8 625.9C344.2 619.5 338.7 609.1 333.7 602.2C328.7 595.2 325.3 590.3 321.9 584.2C318.4 578.1 315.5 572.5 313.1 565.6C310.7 558.7 308.8 550.2 307.6 542.7C306.4 535.3 305.8 528.7 305.9 520.8C305.9 512.8 306.1 504.3 307.9 495.3C309.6 486.2 311.8 476.4 316.4 466.5C320.9 456.7 326.9 445.6 335.1 436.3C343.3 427.0 354.2 418.6 365.6 410.7C376.9 402.8 388.9 393.7 403.0 388.7C417.1 383.7 434.0 381.8 450.0 380.7C466.0 379.6 483.3 380.9 499.2 382.1C515.2 383.3 528.8 383.7 545.7 387.8C562.6 391.9 586.8 401.5 600.6 406.6C614.4 411.8 624.1 416.5 628.7 418.5Z" fill="#5683cc"/>
<path d="M628.8 418.5C624.1 416.5 614.5 411.8 600.6 406.6C586.8 401.5 562.6 391.8 545.8 387.8C528.9 383.7 515.2 383.2 499.2 382.1C483.3 380.9 466.0 379.5 450.0 380.6C434.0 381.7 417.1 383.6 403.0 388.6C388.9 393.6 376.8 402.7 365.5 410.6C354.2 418.6 343.2 426.9 335.0 436.2C326.8 445.6 320.8 456.7 316.2 466.5C311.7 476.3 309.5 486.2 307.8 495.2C306.0 504.3 305.8 512.8 305.8 520.8C305.7 528.7 306.3 535.3 307.5 542.8C308.7 550.2 310.6 558.7 313.0 565.6C315.4 572.5 318.3 578.1 321.8 584.2C325.2 590.4 328.6 595.3 333.6 602.2C338.6 609.2 344.1 619.6 351.8 626.0C359.4 632.4 370.1 636.9 379.2 640.8C388.4 644.6 395.9 647.0 406.5 649.1C417.1 651.2 429.3 653.3 443.0 653.2C456.7 653.2 475.0 651.7 488.5 648.6C502.0 645.5 513.4 640.0 524.1 634.6C534.8 629.3 543.8 623.2 552.6 616.8C561.5 610.3 571.0 602.3 577.5 596.0C584.0 589.7 587.4 584.9 591.4 579.1C595.3 573.3 598.0 568.1 601.0 561.1C604.0 554.2 606.7 545.4 609.2 537.5C611.8 529.6 613.5 521.9 616.2 513.7C619.0 505.5 622.2 495.8 625.8 488.4C629.3 481.0 632.8 475.1 637.5 469.0C642.2 462.9 648.4 455.4 654.0 451.8C659.6 448.1 660.0 447.6 671.0 447.4C682.0 447.1 686.4 445.8 720.0 450.4C753.6 454.9 847.3 470.5 872.8 474.5L872.8 472.9C847.4 468.9 753.8 453.3 720.0 448.8C686.2 444.2 681.1 445.4 670.0 445.6C658.8 445.8 658.7 446.3 653.0 449.9C647.2 453.5 640.5 461.0 635.6 467.3C630.7 473.5 627.0 479.6 623.4 487.2C619.7 494.8 616.5 504.5 613.7 512.7C610.9 521.0 609.2 528.7 606.7 536.6C604.2 544.5 601.5 553.2 598.6 560.0C595.6 566.9 593.0 572.0 589.1 577.7C585.3 583.4 581.9 588.1 575.6 594.3C569.2 600.4 559.8 608.4 551.0 614.7C542.3 621.1 533.5 627.1 523.0 632.3C512.5 637.6 501.3 643.1 488.0 646.1C474.6 649.2 456.5 650.6 443.0 650.7C429.5 650.8 417.5 648.7 407.0 646.6C396.6 644.6 389.2 642.2 380.2 638.4C371.2 634.6 360.7 630.2 353.2 623.9C345.8 617.6 340.4 607.3 335.5 600.4C330.6 593.6 327.3 588.7 323.9 582.8C320.6 576.8 317.7 571.3 315.4 564.5C313.1 557.8 311.3 549.4 310.1 542.1C309.0 534.9 308.4 528.6 308.5 520.8C308.5 513.1 308.6 504.7 310.3 495.9C311.9 487.0 314.0 477.3 318.4 467.5C322.8 457.8 328.7 446.8 336.7 437.6C344.8 428.3 355.6 420.0 366.7 412.2C377.8 404.3 389.5 395.3 403.3 390.3C417.2 385.4 434.0 383.4 450.0 382.3C466.0 381.2 483.2 382.6 499.2 383.7C515.1 384.8 528.6 385.2 545.5 389.1C562.4 393.0 586.6 402.2 600.4 407.1C614.2 412.0 623.8 416.7 628.5 418.7Z" fill="#4a76c0"/>
<path d="M628.5 418.7C623.8 416.7 614.2 412.0 600.4 407.1C586.6 402.1 562.4 392.9 545.5 389.0C528.6 385.1 515.1 384.8 499.2 383.6C483.2 382.5 466.0 381.1 450.0 382.2C434.0 383.4 417.2 385.3 403.3 390.2C389.4 395.2 377.8 404.2 366.7 412.1C355.6 420.0 344.7 428.3 336.7 437.5C328.6 446.7 322.8 457.8 318.3 467.5C313.9 477.2 311.8 486.9 310.2 495.8C308.5 504.7 308.4 513.1 308.3 520.8C308.3 528.6 308.8 534.9 310.0 542.2C311.2 549.5 313.0 557.8 315.3 564.6C317.6 571.4 320.5 576.8 323.8 582.8C327.2 588.8 330.5 593.6 335.4 600.5C340.3 607.4 345.7 617.7 353.2 624.0C360.6 630.3 371.2 634.7 380.2 638.5C389.1 642.3 396.5 644.7 407.0 646.8C417.5 648.8 429.5 650.9 443.0 650.8C456.5 650.8 474.7 649.3 488.0 646.2C501.3 643.2 512.5 637.7 523.1 632.4C533.6 627.2 542.3 621.2 551.1 614.8C559.9 608.5 569.3 600.5 575.7 594.3C582.0 588.2 585.4 583.5 589.2 577.8C593.1 572.0 595.7 566.9 598.7 560.1C601.6 553.2 604.3 544.5 606.8 536.7C609.4 528.8 611.1 521.0 613.8 512.8C616.6 504.5 619.9 494.8 623.5 487.3C627.1 479.7 630.8 473.5 635.7 467.3C640.6 461.1 647.3 453.6 653.0 450.0C658.7 446.4 658.8 445.9 670.0 445.7C681.2 445.5 686.2 444.3 720.0 448.8C753.8 453.4 847.4 469.0 872.8 473.0L872.9 471.4C847.4 467.4 754.0 451.8 720.0 447.2C686.0 442.7 680.3 443.7 669.0 443.9C657.6 444.1 657.8 444.6 652.0 448.2C646.1 451.8 638.9 459.3 633.7 465.6C628.6 471.9 624.9 478.4 621.1 486.1C617.4 493.8 614.1 503.6 611.3 511.8C608.5 520.1 606.8 527.9 604.3 535.8C601.8 543.7 599.1 552.2 596.2 559.0C593.3 565.7 590.8 570.7 587.0 576.3C583.3 581.9 580.0 586.5 573.7 592.6C567.5 598.7 558.1 606.6 549.5 612.8C540.8 619.1 532.3 625.0 522.0 630.1C511.7 635.3 500.6 640.7 487.5 643.8C474.3 646.8 456.3 648.2 443.0 648.3C429.7 648.4 417.8 646.3 407.5 644.3C397.2 642.2 389.9 639.9 381.1 636.1C372.3 632.4 362.0 628.1 354.7 621.9C347.3 615.7 342.1 605.4 337.3 598.7C332.5 591.9 329.3 587.2 326.0 581.3C322.8 575.5 320.0 570.1 317.8 563.5C315.5 556.9 313.7 548.7 312.6 541.6C311.5 534.5 311.0 528.4 311.0 520.9C311.1 513.4 311.1 505.2 312.7 496.4C314.3 487.7 316.2 478.2 320.5 468.5C324.8 458.9 330.5 448.0 338.4 438.8C346.3 429.7 357.0 421.4 367.9 413.6C378.8 405.8 390.0 396.9 403.7 392.0C417.4 387.0 434.1 385.1 450.0 384.0C465.9 382.8 483.2 384.2 499.1 385.3C515.0 386.4 528.4 386.6 545.2 390.3C562.1 394.0 586.4 402.8 600.2 407.6C614.0 412.3 623.6 417.0 628.2 418.8Z" fill="#3f69b2"/>
<path d="M628.2 418.8C623.6 417.0 614.0 412.3 600.2 407.5C586.4 402.8 562.1 394.0 545.2 390.2C528.4 386.5 515.0 386.3 499.1 385.2C483.2 384.2 465.9 382.8 450.0 383.9C434.1 385.0 417.4 386.9 403.7 391.9C390.0 396.8 378.7 405.7 367.8 413.5C356.9 421.4 346.2 429.6 338.3 438.8C330.4 447.9 324.7 458.9 320.4 468.5C316.1 478.1 314.2 487.7 312.6 496.4C311.0 505.2 310.9 513.4 310.9 520.9C310.9 528.4 311.4 534.5 312.5 541.6C313.6 548.7 315.4 556.9 317.7 563.5C319.9 570.2 322.7 575.5 325.9 581.4C329.2 587.3 332.4 592.0 337.2 598.8C342.0 605.5 347.3 615.8 354.6 622.0C361.9 628.2 372.3 632.5 381.1 636.2C389.9 640.0 397.2 642.3 407.5 644.4C417.8 646.4 429.7 648.5 443.0 648.4C456.3 648.3 474.3 646.9 487.5 643.9C500.7 640.8 511.7 635.4 522.0 630.2C532.4 625.1 540.9 619.2 549.5 612.9C558.2 606.7 567.6 598.8 573.8 592.7C580.1 586.6 583.4 582.0 587.1 576.4C590.9 570.8 593.5 565.8 596.3 559.0C599.2 552.3 601.9 543.7 604.4 535.8C606.9 528.0 608.6 520.2 611.4 511.9C614.2 503.6 617.5 493.8 621.2 486.1C625.0 478.4 628.7 472.0 633.8 465.7C639.0 459.4 646.1 451.9 652.0 448.2C657.9 444.6 657.7 444.1 669.0 444.0C680.3 443.8 686.0 442.7 720.0 447.3C754.0 451.9 847.4 467.5 872.9 471.5L873.0 469.9C847.5 465.9 754.2 450.3 720.0 445.7C685.8 441.1 679.5 442.1 668.0 442.2C656.4 442.3 657.0 442.8 651.0 446.4C644.9 450.0 637.3 457.5 631.9 463.9C626.6 470.3 622.7 477.1 618.9 484.9C615.1 492.8 611.7 502.6 608.9 511.0C606.0 519.3 604.4 527.1 601.9 535.0C599.4 542.8 596.7 551.3 593.9 558.0C591.1 564.6 588.6 569.4 584.9 574.9C581.2 580.4 578.1 584.9 571.9 590.9C565.7 596.9 556.4 604.7 547.9 610.9C539.4 617.1 531.1 622.8 521.0 627.9C510.8 633.0 500.0 638.4 487.0 641.4C474.0 644.4 456.2 645.8 443.0 645.9C429.8 646.0 418.2 643.9 408.0 641.9C397.9 639.9 390.7 637.6 382.0 633.9C373.4 630.2 363.2 626.1 356.1 619.9C348.9 613.7 343.7 603.6 339.1 596.9C334.4 590.3 331.3 585.7 328.1 579.9C324.9 574.2 322.3 568.9 320.1 562.5C317.9 556.0 316.2 547.9 315.1 541.0C314.0 534.1 313.6 528.3 313.6 521.0C313.6 513.7 313.6 505.6 315.1 497.0C316.6 488.5 318.4 479.0 322.6 469.5C326.8 460.1 332.3 449.1 340.1 440.1C347.8 431.0 358.4 422.8 369.1 415.1C379.7 407.3 390.5 398.5 404.0 393.6C417.5 388.7 434.2 386.7 450.0 385.6C465.8 384.5 483.2 385.9 499.0 386.9C514.8 387.9 528.2 388.0 545.0 391.6C561.8 395.1 586.2 403.4 600.0 408.0C613.8 412.6 623.3 417.2 628.0 419.0Z" fill="#34589d"/>
<path d="M629.0 434.0L662.5 438.0L660.0 446.0L640.0 455.0L631.0 462.0L627.0 462.0Z" fill="#5683cc"/>
<path d="M629 440L661 444M630 447L652 449" stroke="#3a61a8" stroke-width="1.6" fill="none"/>
<path d="M672.5 395.0L874.0 424.0L880.0 426.0L880.0 445.0L873.0 467.0L870.0 467.5L680.0 442.5L662.5 438.0L666.5 420.0Z" fill="#507dc7"/>
<path d="M672.5 395.0L874.0 424.0L873.0 437.5L669.5 408.5Z" fill="#5683cc"/>
<line x1="675.6" y1="399.0" x2="872.0" y2="427.9" stroke="#3a61a8" stroke-width="1.8"/>
<line x1="674.6" y1="403.5" x2="872.0" y2="432.3" stroke="#3a61a8" stroke-width="1.8"/>
<line x1="673.6" y1="408.0" x2="872.0" y2="436.7" stroke="#3a61a8" stroke-width="1.8"/>
<path d="M874.0 424.0L880.0 426.0L880.0 445.0L873.0 467.0L870.0 467.0Z" fill="#5f8cd4"/>
<path d="M871 428V443" stroke="#3a61a8" stroke-width="1.5"/>
<path d="M664 440L870 468.5" stroke="#3a61a8" stroke-width="3"/>
<path d="M872.0 470.0L880.0 470.0L880.0 492.5L847.5 542.5L843.0 542.0L871.0 490.0Z" fill="#5f8cd4"/>
<path d="M871 473V488" stroke="#3a61a8" stroke-width="1.5"/>
<path d="M466.3 456.6L400.0 485.6L396.6 541.2L409.9 549.5L448.0 594.4L515.3 564.5L521.0 502.2Z" fill="#4c78c2"/>
<path d="M400.0 485.6L396.6 541.2L409.9 549.5L413.0 546.0L408.0 492.0Z" fill="#335799"/>
<path d="M409.9 549.5L480.2 559.5L515.3 564.5L448.0 594.4Z" fill="#5582ca"/>
<path d="M480.2 559.5L521.0 502.2L515.3 564.5Z" fill="#5e8bd2"/>
<path d="M466.3 456.6L400.0 485.6L409.9 549.5L480.2 559.5L521.0 502.2Z" fill="#4873bc"/>
<path d="M466.3 456.6L400.0 485.6L403.7 488.1L466.5 460.7Z" fill="#5a87cf"/>
<path d="M466.5 460.7L403.7 488.1L407.4 490.7L466.7 464.7Z" fill="#3b64ab"/>
<path d="M400.0 485.6L409.9 549.5L413.1 548.7L403.7 488.1Z" fill="#416bb3"/>
<path d="M403.7 488.1L413.1 548.7L416.3 547.9L407.4 490.7Z" fill="#385ea4"/>
<path d="M409.9 549.5L480.2 559.5L479.7 558.2L413.1 548.7Z" fill="#4e7ac3"/>
<path d="M413.1 548.7L479.7 558.2L479.2 556.8L416.3 547.9Z" fill="#3d66ad"/>
<path d="M480.2 559.5L521.0 502.2L518.3 503.9L479.7 558.2Z" fill="#5784cc"/>
<path d="M479.7 558.2L518.3 503.9L515.7 505.5L479.2 556.8Z" fill="#4771ba"/>
<path d="M521.0 502.2L466.3 456.6L466.5 460.7L518.3 503.9Z" fill="#4873bd"/>
<path d="M518.3 503.9L466.5 460.7L466.7 464.7L515.7 505.5Z" fill="#446fb9"/>
<path d="M466.7 464.7L407.4 490.7L411.1 493.2L467.0 468.8Z" fill="#5a87cf"/>
<path d="M467.0 468.8L411.1 493.2L414.8 495.8L467.2 472.9Z" fill="#3b64ab"/>
<path d="M407.4 490.7L416.3 547.9L419.4 547.1L411.1 493.2Z" fill="#416bb3"/>
<path d="M411.1 493.2L419.4 547.1L422.6 546.2L414.8 495.8Z" fill="#385ea4"/>
<path d="M416.3 547.9L479.2 556.8L478.7 555.5L419.4 547.1Z" fill="#4e7ac3"/>
<path d="M419.4 547.1L478.7 555.5L478.2 554.1L422.6 546.2Z" fill="#3d66ad"/>
<path d="M479.2 556.8L515.7 505.5L513.0 507.2L478.7 555.5Z" fill="#5784cc"/>
<path d="M478.7 555.5L513.0 507.2L510.4 508.9L478.2 554.1Z" fill="#4771ba"/>
<path d="M515.7 505.5L466.7 464.7L467.0 468.8L513.0 507.2Z" fill="#4873bd"/>
<path d="M513.0 507.2L467.0 468.8L467.2 472.9L510.4 508.9Z" fill="#446fb9"/>
<path d="M467.2 472.9L414.8 495.8L418.5 498.3L467.4 476.9Z" fill="#5a87cf"/>
<path d="M467.4 476.9L418.5 498.3L422.2 500.8L467.6 481.0Z" fill="#3b64ab"/>
<path d="M414.8 495.8L422.6 546.2L425.8 545.4L418.5 498.3Z" fill="#416bb3"/>
<path d="M418.5 498.3L425.8 545.4L429.0 544.6L422.2 500.8Z" fill="#385ea4"/>
<path d="M422.6 546.2L478.2 554.1L477.7 552.8L425.8 545.4Z" fill="#4e7ac3"/>
<path d="M425.8 545.4L477.7 552.8L477.1 551.5L429.0 544.6Z" fill="#3d66ad"/>
<path d="M478.2 554.1L510.4 508.9L507.7 510.5L477.7 552.8Z" fill="#5784cc"/>
<path d="M477.7 552.8L507.7 510.5L505.1 512.2L477.1 551.5Z" fill="#4771ba"/>
<path d="M510.4 508.9L467.2 472.9L467.4 476.9L507.7 510.5Z" fill="#4873bd"/>
<path d="M507.7 510.5L467.4 476.9L467.6 481.0L505.1 512.2Z" fill="#446fb9"/>
<path d="M467.6 481.0L422.2 500.8L425.9 503.4L467.8 485.0Z" fill="#5a87cf"/>
<path d="M467.8 485.0L425.9 503.4L429.6 505.9L468.1 489.1Z" fill="#3b64ab"/>
<path d="M422.2 500.8L429.0 544.6L432.2 543.8L425.9 503.4Z" fill="#416bb3"/>
<path d="M425.9 503.4L432.2 543.8L435.4 543.0L429.6 505.9Z" fill="#385ea4"/>
<path d="M429.0 544.6L477.1 551.5L476.6 550.1L432.2 543.8Z" fill="#4e7ac3"/>
<path d="M432.2 543.8L476.6 550.1L476.1 548.8L435.4 543.0Z" fill="#3d66ad"/>
<path d="M477.1 551.5L505.1 512.2L502.4 513.9L476.6 550.1Z" fill="#5784cc"/>
<path d="M476.6 550.1L502.4 513.9L499.8 515.6L476.1 548.8Z" fill="#4771ba"/>
<path d="M505.1 512.2L467.6 481.0L467.8 485.0L502.4 513.9Z" fill="#4873bd"/>
<path d="M502.4 513.9L467.8 485.0L468.1 489.1L499.8 515.6Z" fill="#446fb9"/>
<path d="M468.1 489.1L429.6 505.9L433.3 508.5L468.3 493.2Z" fill="#5a87cf"/>
<path d="M468.3 493.2L433.3 508.5L437.0 511.0L468.5 497.2Z" fill="#3b64ab"/>
<path d="M429.6 505.9L435.4 543.0L438.5 542.2L433.3 508.5Z" fill="#416bb3"/>
<path d="M433.3 508.5L438.5 542.2L441.7 541.4L437.0 511.0Z" fill="#385ea4"/>
<path d="M435.4 543.0L476.1 548.8L475.6 547.5L438.5 542.2Z" fill="#4e7ac3"/>
<path d="M438.5 542.2L475.6 547.5L475.1 546.1L441.7 541.4Z" fill="#3d66ad"/>
<path d="M476.1 548.8L499.8 515.6L497.1 517.2L475.6 547.5Z" fill="#5784cc"/>
<path d="M475.6 547.5L497.1 517.2L494.5 518.9L475.1 546.1Z" fill="#4771ba"/>
<path d="M499.8 515.6L468.1 489.1L468.3 493.2L497.1 517.2Z" fill="#4873bd"/>
<path d="M497.1 517.2L468.3 493.2L468.5 497.2L494.5 518.9Z" fill="#446fb9"/>
<path d="M468.5 497.2L437.0 511.0L440.7 513.6L468.7 501.3Z" fill="#5a87cf"/>
<path d="M468.7 501.3L440.7 513.6L444.4 516.1L468.9 505.4Z" fill="#3b64ab"/>
<path d="M437.0 511.0L441.7 541.4L444.9 540.5L440.7 513.6Z" fill="#416bb3"/>
<path d="M440.7 513.6L444.9 540.5L448.1 539.7L444.4 516.1Z" fill="#385ea4"/>
<path d="M441.7 541.4L475.1 546.1L474.6 544.8L444.9 540.5Z" fill="#4e7ac3"/>
<path d="M444.9 540.5L474.6 544.8L474.1 543.4L448.1 539.7Z" fill="#3d66ad"/>
<path d="M475.1 546.1L494.5 518.9L491.8 520.6L474.6 544.8Z" fill="#5784cc"/>
<path d="M474.6 544.8L491.8 520.6L489.2 522.2L474.1 543.4Z" fill="#4771ba"/>
<path d="M494.5 518.9L468.5 497.2L468.7 501.3L491.8 520.6Z" fill="#4873bd"/>
<path d="M491.8 520.6L468.7 501.3L468.9 505.4L489.2 522.2Z" fill="#446fb9"/>
<path d="M468.9 505.4L444.4 516.1L448.1 518.6L469.2 509.4Z" fill="#5a87cf"/>
<path d="M469.2 509.4L448.1 518.6L451.8 521.2L469.4 513.5Z" fill="#3b64ab"/>
<path d="M444.4 516.1L448.1 539.7L451.3 538.9L448.1 518.6Z" fill="#416bb3"/>
<path d="M448.1 518.6L451.3 538.9L454.4 538.1L451.8 521.2Z" fill="#385ea4"/>
<path d="M448.1 539.7L474.1 543.4L473.6 542.1L451.3 538.9Z" fill="#4e7ac3"/>
<path d="M451.3 538.9L473.6 542.1L473.1 540.8L454.4 538.1Z" fill="#3d66ad"/>
<path d="M474.1 543.4L489.2 522.2L486.5 523.9L473.6 542.1Z" fill="#5784cc"/>
<path d="M473.6 542.1L486.5 523.9L483.9 525.6L473.1 540.8Z" fill="#4771ba"/>
<path d="M489.2 522.2L468.9 505.4L469.2 509.4L486.5 523.9Z" fill="#4873bd"/>
<path d="M486.5 523.9L469.2 509.4L469.4 513.5L483.9 525.6Z" fill="#446fb9"/>
<path d="M469.4 513.5L451.8 521.2L455.5 523.7L469.6 517.6Z" fill="#5a87cf"/>
<path d="M469.6 517.6L455.5 523.7L459.2 526.3L469.8 521.6Z" fill="#3b64ab"/>
<path d="M451.8 521.2L454.4 538.1L457.6 537.3L455.5 523.7Z" fill="#416bb3"/>
<path d="M455.5 523.7L457.6 537.3L460.8 536.5L459.2 526.3Z" fill="#385ea4"/>
<path d="M454.4 538.1L473.1 540.8L472.6 539.4L457.6 537.3Z" fill="#4e7ac3"/>
<path d="M457.6 537.3L472.6 539.4L472.1 538.1L460.8 536.5Z" fill="#3d66ad"/>
<path d="M473.1 540.8L483.9 525.6L481.2 527.2L472.6 539.4Z" fill="#5784cc"/>
<path d="M472.6 539.4L481.2 527.2L478.6 528.9L472.1 538.1Z" fill="#4771ba"/>
<path d="M483.9 525.6L469.4 513.5L469.6 517.6L481.2 527.2Z" fill="#4873bd"/>
<path d="M481.2 527.2L469.6 517.6L469.8 521.6L478.6 528.9Z" fill="#446fb9"/>
<path d="M469.8 521.6L459.2 526.3L462.4 528.4L470.0 525.1Z" fill="#5a87cf"/>
<path d="M470.0 525.1L462.4 528.4L465.6 530.6L470.2 528.6Z" fill="#3b64ab"/>
<path d="M459.2 526.3L460.8 536.5L463.5 535.8L462.4 528.4Z" fill="#416bb3"/>
<path d="M462.4 528.4L463.5 535.8L466.3 535.1L465.6 530.6Z" fill="#385ea4"/>
<path d="M460.8 536.5L472.1 538.1L471.6 536.9L463.5 535.8Z" fill="#4e7ac3"/>
<path d="M463.5 535.8L471.6 536.9L471.2 535.8L466.3 535.1Z" fill="#3d66ad"/>
<path d="M472.1 538.1L478.6 528.9L476.3 530.3L471.6 536.9Z" fill="#5784cc"/>
<path d="M471.6 536.9L476.3 530.3L474.0 531.8L471.2 535.8Z" fill="#4771ba"/>
<path d="M478.6 528.9L469.8 521.6L470.0 525.1L476.3 530.3Z" fill="#4873bd"/>
<path d="M476.3 530.3L470.0 525.1L470.2 528.6L474.0 531.8Z" fill="#446fb9"/>
<path d="M470.2 528.6L465.6 530.6L466.3 535.1L471.2 535.8L474.0 531.8Z" fill="#4c78c1"/>
<path d="M409.9 549.5L400.0 485.6L466.3 456.6L521.0 502.2" fill="none" stroke="#5d8ad1" stroke-width="1.2"/>
<path d="M400.0 485.6L396.6 541.2L409.9 549.5Z" fill="#345899"/>
</g>
</svg>
</div>

<!-- right panel -->
<div id="panel" class="abs"></div>
<div class="abs" style="left:982px;top:50px;width:289px;height:2px;background:#4a443c"></div>
<div id="info" class="abs">INFO</div>
<div id="ta" class="abs"><div class="abs" style="left:5.6px;top:-2px"><div class="ln"><span style="transform:scaleX(0.9325)">App Path: C:\Programmi\Jabaco\PROGETTI\CNC\MaxCNC</span></div>
<div class="ln"></div>
<div class="ln"><span style="transform:scaleX(0.9622)">Welcome to Jabaco CNCFrame Library</span></div>
<div class="ln"></div>
<div class="ln"><span style="transform:scaleX(0.9173)">THIS IS YOUR SYSTEM :</span></div>
<div class="ln"></div>
<div class="ln"><span style="transform:scaleX(0.9823)">Operating System: Windows XP</span></div>
<div class="ln"><span style="transform:scaleX(0.9898)">Version: 5.1</span></div>
<div class="ln"><span style="transform:scaleX(1.0146)">Architecture: x86</span></div>
<div class="ln"><span style="transform:scaleX(0.9743)">Processor: x86 Family 6 Model 8 Stepping 1, AuthenticAMD</span></div>
<div class="ln"><span style="transform:scaleX(0.9851)">Processors: 1</span></div>
<div class="ln"><span style="transform:scaleX(0.9131)">Computer Name: COMPUTER</span></div>
<div class="ln"><span style="transform:scaleX(0.9505)">User Name: Utente</span></div>
<div class="ln"><span style="transform:scaleX(0.9627)">User Home: C:\Documents and Settings\Utente</span></div>
<div class="ln"><span style="transform:scaleX(0.9341)">Temp Folder: C:\DOCUME~1\Utente\IMPOST~1\Temp\</span></div>
<div class="ln"><span style="transform:scaleX(0.9438)">Class Path: MaxCNC.jar</span></div>
<div class="ln"><span style="transform:scaleX(0.9474)">Library Path: C:\WINDOWS\system32;C:\WINDOWS\Sun\Java\bin</span></div>
<div class="ln"><span style="transform:scaleX(0.9742)">File Separator: \</span></div>
<div class="ln"><span style="transform:scaleX(0.9619)">Path Separator: ;</span></div>
<div class="ln"></div>
<div class="ln"><span style="transform:scaleX(0.9779)">JVM Max Heap Space: 518979584 Bytes</span></div>
<div class="ln"><span style="transform:scaleX(0.9806)">JVM Total Heap Space: 518979584 Bytes</span></div>
<div class="ln"><span style="transform:scaleX(0.9790)">JVM Free Heap Space: 453129912 Bytes</span></div>
<div class="ln"></div>
<div class="ln"><span style="transform:scaleX(0.9576)">Plane Dimension Axis X: 200 mm</span></div>
<div class="ln"><span style="transform:scaleX(0.9686)">Plane Dimension Axis Y: 200 mm</span></div>
<div class="ln"><span style="transform:scaleX(0.9613)">Plane Dimension Axis Z: 200 mm</span></div>
<div class="ln"></div>
<div class="ln"><span style="transform:scaleX(0.9302)">UNIT SCALE: 1.0</span></div>
<div class="ln"></div>
<div class="ln"><span style="transform:scaleX(0.9725)">Recognized Plane Size: 200.0, 200.0, 200.0</span></div>
<div class="ln"><span style="transform:scaleX(0.9527)">Filament Divisions: 10</span></div>
<div class="ln"><span style="transform:scaleX(0.9180)">SIMULATION MODE (ON)</span></div>
<div class="ln"></div>
<div class="ln"><span style="transform:scaleX(0.9747)">Current X: 0.0</span></div>
<div class="ln"><span style="transform:scaleX(1.0012)">Current Y: 0.0</span></div>
<div class="ln"><span style="transform:scaleX(0.9837)">Current Z: 0.0</span></div>
<div class="ln"><span style="transform:scaleX(0.9578)">ClearAll File In Memory = false</span></div>
<div class="ln"><span style="transform:scaleX(0.9483)">File In Memory = True</span></div>
<div class="ln"><span style="transform:scaleX(1.0031)">Loaded: whistle_v2_By_Slic3r.gcode    Size: 725224 Bytes</span></div>
<div class="ln"><span style="transform:scaleX(0.9723)">Starting ...</span></div>
<div class="ln"><span style="transform:scaleX(0.9353)">M302</span></div>
<div class="ln"><span style="transform:scaleX(0.8775)">G21</span></div>
<div class="ln"><span style="transform:scaleX(0.9376)">G90</span></div></div></div>
<!-- vertical scrollbar -->
<div class="abs" style="left:1254px;top:52px;width:17px;height:618px;background:linear-gradient(90deg,#e4ecfb,#f2f6fd 40%,#fcfdff)"></div>
<div class="abs sbb" style="left:1254px;top:53px"><svg width="16" height="17"><path d="M4.5 10.5 L8 7 L11.5 10.5" stroke="#4d6185" stroke-width="2.4" fill="none"/></svg></div>
<div class="abs sbt" style="left:1254px;top:80px;width:16px;height:326px"><div class="abs" style="left:4px;top:159px;width:7px;height:7px;background:repeating-linear-gradient(#8aa6dc 0,#8aa6dc 1px,#eef4fe 1px,#eef4fe 2px)"></div></div>
<div class="abs sbb" style="left:1254px;top:652px"><svg width="16" height="17"><path d="M4.5 6.5 L8 10 L11.5 6.5" stroke="#4d6185" stroke-width="2.4" fill="none"/></svg></div>
<!-- horizontal scrollbar -->
<div class="abs" style="left:982px;top:670px;width:272px;height:16px;background:linear-gradient(#e6eefc,#f6f9ff 40%,#ffffff)"></div>
<div class="abs sbb" style="left:983px;top:670px;width:17px;height:16px"><svg width="16" height="16"><path d="M9.5 4.5 L6 8 L9.5 11.5" stroke="#4d6185" stroke-width="2.4" fill="none"/></svg></div>
<div class="abs sbt h" style="left:1000px;top:670px;width:35px;height:16px"><div class="abs" style="left:13px;top:4px;width:8px;height:7px;background:repeating-linear-gradient(90deg,#8aa6dc 0,#8aa6dc 1px,#eef4fe 1px,#eef4fe 2px)"></div></div>
<div class="abs sbb" style="left:1236px;top:670px;width:17px;height:16px"><svg width="16" height="16"><path d="M6.5 4.5 L10 8 L6.5 11.5" stroke="#4d6185" stroke-width="2.4" fill="none"/></svg></div>
<div class="abs" style="left:1253px;top:670px;width:18px;height:16px;background:#525252"></div>

<!-- CLS + input -->
<div class="abs btn" style="left:983px;top:691px;width:68px;height:18px;line-height:16px;box-shadow:inset 0 0 0 1px #f4f6fa,0 0 0 1px #fff">CLS</div>
<div class="abs tf" style="left:1058px;top:691px;width:214px;height:19px;border-color:#c8c8c8"></div>

<!-- row of checkboxes -->
<div class="abs cb" style="left:988px;top:720px"><svg width="9" height="9"><path d="M1 4 L3.5 6.5 L8 1.5" stroke="#21a121" stroke-width="2" fill="none"/></svg></div>
<div class="abs lab" style="left:1008px;top:720px">Do not draw G0</div>
<div class="abs cb" style="left:1104px;top:720px"></div>
<div class="abs lab" style="left:1124px;top:720px">Show Bounds</div>
<div class="abs lab" style="left:1219px;top:721px">Travel</div>
<div class="abs cb" style="left:1256px;top:720px"></div>

<!-- Filament Color group -->
<div class="abs" style="left:986px;top:745px;width:159px;height:67px;border:1px solid #6e6e6e;box-shadow:inset 1px 1px 0 #3a3a3a"></div>
<div class="abs" style="left:993px;top:739px;width:85px;height:12px;background:#525252"></div>
<div class="abs" style="left:995px;top:739px;font-weight:bold;font-size:12px;color:#62c0f4;white-space:pre;line-height:15px;letter-spacing:-0.2px">Filament Color</div>
<div class="abs rb" style="left:998px;top:758px"></div>
<div class="abs lab" style="left:1017px;top:758px;color:#e4e4e4">By Layer</div>
<div class="abs rb on" style="left:1078px;top:758px"></div>
<div class="abs lab" style="left:1097px;top:758px;color:#e4e4e4">Real</div>
<div class="abs rb" style="left:998px;top:786px"></div>
<div class="abs lab" style="left:1017px;top:786px;color:#e4e4e4">By Speed</div>
<div class="abs btn b" style="left:1081px;top:785px;width:55px;height:19px;line-height:17px;font-size:12px;border-color:#16306e;box-shadow:inset 0 0 0 1px #f0f4fb,0 0 0 1px #f4f6fb">Pick</div>

<!-- Play on Windows XP -->
<div class="abs" style="left:1171px;top:757px;font-weight:bold;font-style:italic;font-size:15px;color:#6484ff;white-space:pre;line-height:19px">Play on</div>
<div class="abs" style="left:1180px;top:777px;font-weight:bold;font-style:italic;font-size:15px;color:#6484ff;white-space:pre;line-height:19px;letter-spacing:-0.1px">Windows XP</div>
<div class="abs" style="left:1249px;top:797px;font-weight:bold;font-size:12.5px;color:#c8c8c8;line-height:14px">x86</div>
<svg class="abs" style="left:1232px;top:743px" width="37" height="34" viewBox="0 0 37 34">
 <defs>
  <linearGradient id="wr" x1="0" y1="0" x2="1" y2="1"><stop offset="0" stop-color="#f6a24a"/><stop offset="1" stop-color="#d8321a"/></linearGradient>
  <linearGradient id="wg" x1="0" y1="0" x2="1" y2="1"><stop offset="0" stop-color="#9ad65a"/><stop offset="1" stop-color="#2f9a2a"/></linearGradient>
  <linearGradient id="wb" x1="0" y1="0" x2="1" y2="1"><stop offset="0" stop-color="#8fb6f2"/><stop offset="1" stop-color="#2c5fd0"/></linearGradient>
  <linearGradient id="wy" x1="0" y1="0" x2="1" y2="1"><stop offset="0" stop-color="#fbe27a"/><stop offset="1" stop-color="#e8a81e"/></linearGradient>
 </defs>
 <path d="M6.5 3 C10 0.5 14 1 18 3.5 L15 15.5 C11.5 13 7.5 12.8 3.5 15 Z" fill="url(#wr)"/>
 <path d="M20 4.5 C24 7 29 7 34 4 L31 16 C26.5 19 22 18.5 17.5 16.5 Z" fill="url(#wg)"/>
 <path d="M3 17 C6.5 14.8 11 15 14.5 17.5 L11.5 29 C8 26.5 4 26.5 0.5 28.5 Z" fill="url(#wb)"/>
 <path d="M17 18.5 C21 20.5 26 21 30.5 18 L27.5 30 C23 33 18.5 32.5 14 30.5 Z" fill="url(#wy)"/>
</svg>

<!-- Simulation Mode row -->
<div class="abs cb" style="left:988px;top:823px"><svg width="9" height="9"><path d="M1 4 L3.5 6.5 L8 1.5" stroke="#21a121" stroke-width="2" fill="none"/></svg></div>
<div class="abs" style="left:1007px;top:823px;font-weight:bold;font-size:11.5px;color:#ffa200;white-space:pre;line-height:13px">Simulation Mode</div>
<div class="abs cb" style="left:1130px;top:823px"></div>
<div class="abs lab" style="left:1149px;top:823px;color:#62c0f4">Spiral Vase</div>
<div class="abs tf" style="left:1226px;top:826px;width:42px;height:20px;border-color:#a9a9a9"><div class="abs" style="left:2px;top:3px;font-weight:bold;font-size:12px;color:#ff0000;line-height:14px">0</div></div>
<div class="abs cb" style="left:1230px;top:852px"><svg width="9" height="9"><path d="M1 4 L3.5 6.5 L8 1.5" stroke="#21a121" stroke-width="2" fill="none"/></svg></div>
<div class="abs lab" style="left:1246px;top:852px">lyr</div>
<div class="abs" style="left:1224px;top:870px;width:47px;height:19px;background:#ff0000;border:3px solid #2e2e2e"></div>

<!-- Nozzle size -->
<div class="abs lab" style="left:1013px;top:843px;letter-spacing:-0.08px">Nozzle Size</div>
<div class="abs track" style="left:991px;top:864px;width:84px"></div>
<svg class="abs thumb" style="left:996px;top:857px" viewBox="0 0 11 19"><use href="#thumbshape"/></svg>
<div class="abs" style="left:991px;top:878px;width:84px;height:6px;background:repeating-linear-gradient(90deg,#bdbdbd 0,#bdbdbd 1px,transparent 1px,transparent 2.1px)"></div>
<div class="abs tf" style="left:1086px;top:858px;width:33px;height:20px;border-color:#a9a9a9"><div class="abs" style="left:3px;top:3px;font-size:12px;line-height:14px">0.4</div></div>

<!-- Fil Resolution -->
<div class="abs lab" style="left:1139px;top:843px;letter-spacing:-0.3px">Fil Resolution</div>
<div class="abs track" style="left:1133px;top:864px;width:45px"></div>
<svg class="abs thumb" style="left:1152px;top:857px" viewBox="0 0 11 19"><use href="#thumbshape"/></svg>
<div class="abs" style="left:1133px;top:878px;width:45px;height:5px;background:#9a9a9a"></div>
<div class="abs tf" style="left:1188px;top:858px;width:25px;height:20px;border-color:#a9a9a9"><div class="abs" style="left:3px;top:3px;font-size:12px;line-height:14px">30</div></div>

<!-- Simulation speed -->
<div class="abs lab" style="left:1036px;top:893px;letter-spacing:-0.32px">Simulation Speed</div>
<div class="abs track" style="left:991px;top:914px;width:102px"></div>
<svg class="abs thumb" style="left:1052px;top:907px" viewBox="0 0 11 19"><use href="#thumbshape"/></svg>
<div class="abs" style="left:991px;top:927px;width:94px;height:6px;background:repeating-linear-gradient(90deg,#c4c4c4 0,#c4c4c4 1px,transparent 1px,transparent 10.33px)"></div>
<div class="abs track" style="left:1110px;top:914px;width:54px"></div>
<svg class="abs thumb" style="left:1110px;top:907px" viewBox="0 0 11 19"><use href="#thumbshape"/></svg>
<div class="abs" style="left:1115px;top:927px;width:49px;height:6px;background:repeating-linear-gradient(90deg,#c4c4c4 0,#c4c4c4 1px,transparent 1px,transparent 5.35px)"></div>
<div class="abs lab" style="left:996px;top:939px;letter-spacing:0.2px">Draw every</div>
<div class="abs" style="left:1082px;top:939px;font-weight:bold;font-size:12px;color:#62c0f4;line-height:14px">65</div>
<div class="abs lab" style="left:1127px;top:939px">line/s</div>

<!-- right checkboxes -->
<div class="abs cb" style="left:1184px;top:897px"></div>
<div class="abs lab" style="left:1204px;top:897px;color:#ffff00;letter-spacing:-0.2px">As Points</div>
<div class="abs cb" style="left:1184px;top:917px"><svg width="9" height="9"><path d="M1 4 L3.5 6.5 L8 1.5" stroke="#21a121" stroke-width="2" fill="none"/></svg></div>
<div class="abs lab" style="left:1204px;top:917px;color:#ffff00;letter-spacing:-0.36px">Div Grid</div>
<div class="abs cb" style="left:1184px;top:937px"></div>
<div class="abs lab" style="left:1204px;top:937px;color:#ffff00;letter-spacing:-0.33px">Real Speed</div>

<svg width="0" height="0" style="position:absolute"><defs>
 <linearGradient id="thg" x1="0" y1="0" x2="1" y2="0"><stop offset="0" stop-color="#f4f4f0"/><stop offset="0.5" stop-color="#e4e4de"/><stop offset="1" stop-color="#b8b8b0"/></linearGradient>
 <g id="thumbshape"><path d="M0.5 2.5 Q0.5 0.5 2.5 0.5 H8.5 Q10.5 0.5 10.5 2.5 V13 L5.5 18.5 L0.5 13 Z" fill="url(#thg)" stroke="#778892" stroke-width="1"/><path d="M1 2.5 Q1 1 2.5 1 H8.5 Q10 1 10 2.5 V3.5 H1 Z" fill="#2bc42b"/><path d="M1.2 13 L5.5 17.6 L9.8 13" stroke="#2bc42b" stroke-width="1.6" fill="none"/></g>
</defs></svg>

<!-- progress -->
<div class="abs" style="left:8px;top:930px;width:50px;height:19px;background:#2a2a2a;border:1px solid #0fe68c;color:#10e878;font-weight:bold;font-size:14px;line-height:17px;text-align:center">41%</div>
<div class="abs" style="left:66px;top:930px;width:828px;height:18px;background:#fff;border:1px solid #6a6a6a;border-radius:2px"></div>
<div class="abs" style="left:70px;top:932px;width:329px;height:14px;background:linear-gradient(#6cc06c,#44c444 35%,#16da16 80%,#10d010)"></div>
<div class="abs" style="left:70px;top:932px;width:329px;height:14px;background:repeating-linear-gradient(90deg,transparent 0,transparent 5.6px,#fff 5.6px,#fff 7px)"></div>
<!-- transport buttons -->
<div class="abs btn" style="left:6px;top:957px;width:80px;height:33px"><svg class="abs" style="left:33px;top:8px" width="12" height="16"><path d="M2 1 L10 8 L2 15 Z" fill="#000"/></svg></div>
<div class="abs" style="left:89px;top:957px;width:76px;height:33px;background:#fff;border:1px solid #d0d0d0"><div class="abs" style="left:33px;top:10px;width:3px;height:11px;background:#9a9a9a"></div><div class="abs" style="left:39px;top:10px;width:3px;height:11px;background:#9a9a9a"></div></div>
<div class="abs btn" style="left:168px;top:957px;width:80px;height:33px"><div class="abs" style="left:34px;top:11px;width:10px;height:10px;background:#000"></div></div>
<div class="abs btn" style="left:256px;top:957px;width:46px;height:33px"><svg class="abs" style="left:10px;top:6px" width="25" height="21" viewBox="0 0 25 21"><path d="M12.5 1 L24 11 H20.5 V20 H4.5 V11 H1 Z" fill="#2b5fdc" stroke="#1b47b8" stroke-width="1"/><rect x="10" y="13" width="5" height="7" fill="#e8eefc"/><path d="M12.5 3.5 L19 9.5 H6 Z" fill="#4e82f0"/></svg></div>
<div class="abs btn b" style="left:306px;top:957px;width:93px;height:33px;line-height:31px;font-size:11px;letter-spacing:-0.45px">SET OFFS</div>
<div class="abs btn b" style="left:901px;top:931px;width:71px;height:27px;line-height:25px;font-size:12px">Temp</div>
<div class="abs btn b" style="left:901px;top:963px;width:71px;height:27px;line-height:25px;font-size:11px;border-color:#16306e;box-shadow:inset 0 0 0 1px #f0f4fb,inset 0 0 0 2px #c6d2ee">MAIN</div>
<!-- right bottom buttons -->
<div class="abs btn" style="left:977px;top:963px;width:71px;height:26px"><svg class="abs" style="left:26px;top:4px" width="18" height="16" viewBox="0 0 18 16"><path d="M1 5 H7 L8.5 6.5 H15 V14.5 H1 Z" fill="#e8cf86" stroke="#8a7436" stroke-width="1"/><path d="M1 14.5 L3.5 8.5 H17 L15 14.5 Z" fill="#f4e2a4" stroke="#8a7436" stroke-width="1"/><rect x="3" y="1" width="7" height="6" fill="#f8f8f8" stroke="#8a8a8a" stroke-width=".8"/><circle cx="6.5" cy="3.5" r="3" fill="#3aa23a"/><path d="M6.5 1.8 V5.2 M4.8 3.5 H8.2" stroke="#fff" stroke-width="1.1"/></svg></div>
<div class="abs" style="left:1053px;top:963px;width:70px;height:26px;background:#fff;border:1px solid #d8d8d8"><svg class="abs" style="left:10px;top:4px" width="50" height="18" viewBox="0 0 50 18"><path d="M1 8 L9 4.5 Q12 3 13 5 L14 5 V3.5 H22.5 V13.5 H14 V12 L13 12 Q11 14 8 12 Z" fill="#8e8e8e"/><rect x="16" y="6" width="4" height="1.5" fill="#b8b8b8"/><rect x="16" y="9.5" width="4" height="1.5" fill="#b8b8b8"/><path d="M33 7 Q39.500 1.500 46 7" stroke="#b0b0b0" stroke-width="1.6" fill="none"/><path d="M35.500 9.500 Q39.500 6 43.500 9.500" stroke="#b0b0b0" stroke-width="1.6" fill="none"/><circle cx="39.500" cy="12.500" r="1.500" fill="#b0b0b0"/></svg></div>
<div class="abs btn" style="left:1129px;top:963px;width:71px;height:26px"><svg class="abs" style="left:22px;top:3px" width="27" height="20" viewBox="0 0 27 20"><path d="M9.500 3.500 Q11 1.500 13.500 1.500 H16.500 Q18.500 1.500 18.500 3.500 H23.500 Q25.500 3.800 25.500 5.500 Q25.500 7 23.500 7 H17 M17 7 H22 Q23.500 7.200 23.500 8.800 Q23.500 10.300 22 10.300 H17 M17 10.300 H21.500 Q23 10.500 23 12 Q23 13.500 21.500 13.500 H17 M17 13.500 H20.500 Q22 13.700 22 15 Q22 16.500 20.500 16.500 H10.500 Q5.500 16.500 4 13.500 Q1.500 10.500 3 7 Q4.500 4.500 9.500 3.500 Q12.500 4 12.500 7.500" stroke="#111" stroke-width="1.3" fill="#fff" stroke-linejoin="round"/></svg></div>
<div class="abs btn" style="left:1205px;top:963px;width:34px;height:26px"><svg class="abs" style="left:8px;top:4px" width="17" height="17"><rect x="0" y="0" width="16" height="16" fill="#fbfbfd"/><rect x="0" y="0" width="1" height="16" fill="#555"/><rect x="0" y="15" width="16" height="1" fill="#999"/><path d="M2.500 3 H15 M2.500 8 H15 M2.500 13 H15" stroke="#6464d2" stroke-width="2.600" stroke-linecap="round"/><path d="M3 3 H14.500 M3 8 H14.500 M3 13 H14.500" stroke="#b4b4f0" stroke-width="0.900"/></svg></div>
<div class="abs btn" style="left:1243px;top:963px;width:34px;height:26px"><svg class="abs" style="left:8px;top:4px" width="17" height="17"><rect x="0" y="0" width="16" height="16" fill="#fbfbfd"/><rect x="0" y="0" width="1" height="16" fill="#555"/><rect x="0" y="15" width="16" height="1" fill="#999"/><path d="M2.500 3 H15 M2.500 8 H15 M2.500 13 H15" stroke="#6464d2" stroke-width="2.600" stroke-linecap="round"/><path d="M3 3 H14.500 M3 8 H14.500 M3 13 H14.500" stroke="#b4b4f0" stroke-width="0.900"/></svg></div>
<!-- mouse cursor -->
<svg class="abs" style="left:828px;top:971px" width="14" height="22" viewBox="0 0 14 22"><path d="M1 1 V17 L5 13.500 L8 20.500 L10.500 19.500 L7.500 12.500 H12.500 Z" fill="#fff" stroke="#000" stroke-width="1"/></svg>

<div id="taskbar" class="abs"></div>
<div class="abs" style="left:0;top:994px;width:98px;height:30px;border-radius:0 13px 13px 0/0 15px 15px 0;background:linear-gradient(#2f7a2f 0,#74c474 1px,#5cb45c 7px,#44a044 16px,#1c8a1c 16.5px,#159c15 23px,#16bc16 30px);box-shadow:inset -2px 0 2px rgba(20,90,20,.7),1px 0 1px #1a3f90"></div>
<svg class="abs" style="left:10px;top:999px" width="22" height="20" viewBox="0 0 37 34"><path d="M6.5 3 C10 0.5 14 1 18 3.5 L15 15.5 C11.5 13 7.5 12.8 3.5 15 Z" fill="#e8502a"/><path d="M20 4.5 C24 7 29 7 34 4 L31 16 C26.5 19 22 18.5 17.5 16.5 Z" fill="#7cc850"/><path d="M3 17 C6.5 14.8 11 15 14.5 17.5 L11.5 29 C8 26.5 4 26.5 0.5 28.5 Z" fill="#5a8cf0"/><path d="M17 18.5 C21 20.500 26 21 30.500 18 L27.500 30 C23 33 18.500 32.500 14 30.500 Z" fill="#f4c83c"/></svg>
<div class="abs" style="left:34px;top:997px;font-weight:bold;font-style:italic;font-size:19px;color:#fff;line-height:24px;text-shadow:1px 1px 1px #1c5a1c;transform:scaleX(.88);transform-origin:0 0">start</div>

<div class="abs tb" style="left:107px"><svg class="abs" style="left:9px;top:3px" width="17" height="17" viewBox="0 0 17 17"><rect x="2" y="1" width="13" height="10" fill="#e8e8e0" stroke="#333" stroke-width="1"/><rect x="4" y="3" width="9" height="6" fill="#111"/><path d="M5 7 L7 5 L9 7.500 L12 4" stroke="#3cf03c" stroke-width="1" fill="none"/><rect x="1" y="12" width="15" height="4" fill="#d8d4c8" stroke="#444" stroke-width=".8"/></svg><span>Task Manager Windows</span></div>
<div class="abs tb" style="left:267px"><svg class="abs" style="left:9px;top:4px" width="17" height="15"><rect x=".5" y=".5" width="16" height="14" fill="#ece9d8" stroke="#222"/><rect x="1" y="1" width="15" height="3" fill="#111"/></svg><span>Jabaco - jCNCFrame_...</span></div>
<div class="abs tb" style="left:427px"><svg class="abs" style="left:9px;top:4px" width="17" height="15" viewBox="0 0 17 15"><path d="M1 2.500 H6 L7.500 4 H15.500 V13.500 H1 Z" fill="#f4d468" stroke="#8a6a1c" stroke-width="1"/><path d="M1 13.500 L2.500 6 H16 L15.500 13.500 Z" fill="#fbe89a" stroke="#8a6a1c" stroke-width=".8"/></svg><span>C:\Programmi\Jabaco...</span></div>
<div class="abs tb" style="left:587px"><svg class="abs" style="left:9px;top:4px" width="17" height="15"><rect x=".5" y=".5" width="16" height="14" fill="#ece9d8" stroke="#222"/><rect x="1" y="1" width="15" height="3" fill="#111"/></svg><span>Jabaco - MaxCNC [Fo...</span></div>
<div class="abs tb" style="left:747px"><svg class="abs" style="left:9px;top:5px" width="16" height="13"><rect width="16" height="13" fill="#111"/><rect x=".5" y=".5" width="15" height="12" fill="none" stroke="#b8b8b8"/><text x="2" y="9" font-family="Liberation Sans" font-size="7" font-weight="bold" fill="#fff">C:\</text></svg><span>C:\WINDOWS\syste...</span></div>
<div class="abs tb act" style="left:907px"><div class="abs" style="left:10px;top:4px;width:15px;height:15px;background:#f4f0e8;border:1px solid #b9b6a8;border-radius:2px"><svg class="abs" style="left:0;top:-1px" width="14" height="16" viewBox="0 0 14 16"><path d="M7.500 1 C9 3 5 4.500 7 7 M9.500 3 C10.500 4.500 7.500 5.500 8.500 7.500" stroke="#e0491c" stroke-width="1.300" fill="none"/><path d="M3 9.500 H10.500 M4 11.500 H9.500 M2.500 13.500 H11.500" stroke="#5a6f9c" stroke-width="1.100" fill="none"/></svg></div><span style="left:32px">Current File:  whistle...</span></div>
<!-- tray -->
<div class="abs" style="left:1115px;top:994px;width:165px;height:30px;background:linear-gradient(#c9dbf6 0,#f6f9fe 2px,#edf3fc 6px,#dbe7f9 12px,#bdd2f2 19px,#9dbbe9 25px,#7fa6df 29px,#6c96d6 30px);box-shadow:inset 1px 0 0 #fff"></div><div class="abs" style="left:1113px;top:994px;width:2px;height:30px;background:linear-gradient(#2a5fc0,#1d44a0)"></div>
<div class="abs" style="left:1126px;top:1001px;width:16px;height:16px;background:#2a2a2a"><svg width="16" height="16"><path d="M12 3 H6 L3 6 V10 L6 13 H12 V9 H9" stroke="#5fe82a" stroke-width="2" fill="none" stroke-dasharray="2 1"/></svg></div>
<div class="abs" style="left:1146px;top:1003px;width:12px;height:12px;background:#0d3a0d;border:1px solid #111;background-image:repeating-linear-gradient(90deg,transparent 0,transparent 2px,#0a280a 2px,#0a280a 3px),linear-gradient(#1aa01a,#1aa01a)"></div>
<div class="abs" style="left:1162px;top:1002px;width:16px;height:12px;background:#e01818;color:#fff;font-weight:bold;font-style:italic;font-size:9px;line-height:12px;text-align:center;letter-spacing:-0.5px">ATi</div>
<div class="abs" style="left:1180px;top:1001px;width:16px;height:16px;border-radius:50%;background:#f29a1c"><div class="abs" style="left:4px;top:4px;width:8px;height:8px;border-radius:50%;border:2px solid #fff;border-bottom-color:transparent"></div></div>
<svg class="abs" style="left:1197px;top:1001px" width="18" height="16"><rect x="5" y="1" width="9" height="7" fill="#5a6ab8" stroke="#223" stroke-width=".8"/><rect x="1" y="6" width="9" height="7" fill="#7a8ad8" stroke="#223" stroke-width=".8"/><rect x="3" y="14" width="5" height="1.500" fill="#99a"/></svg>
<svg class="abs" style="left:1214px;top:1001px" width="18" height="17"><ellipse cx="8" cy="8" rx="6" ry="7" fill="#9aa0a8" stroke="#555" stroke-width="1"/><ellipse cx="7" cy="8" rx="3" ry="4" fill="#444"/><path d="M13 12 Q16 13 15 16" stroke="#6a7ad0" stroke-width="1.500" fill="none"/></svg>
<div class="abs" style="left:1239px;top:1002px;color:#000;font-size:11px;line-height:14px;letter-spacing:0.1px">17.06</div>

</body></html>
